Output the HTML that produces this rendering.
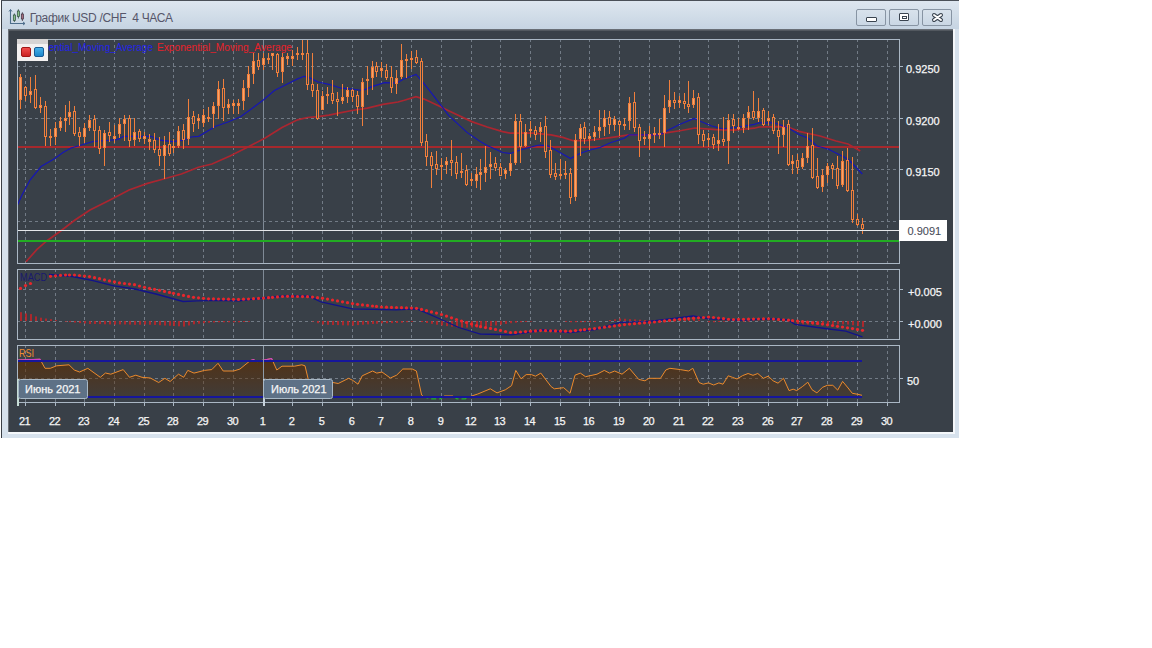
<!DOCTYPE html>
<html><head><meta charset="utf-8"><style>
html,body{margin:0;padding:0;width:1152px;height:648px;background:#fff;overflow:hidden;position:relative;font-family:"Liberation Sans",sans-serif}
#frame{position:absolute;left:1px;top:0;width:958px;height:438px;background:#d6e1ec;}
#frame:before{content:"";position:absolute;left:0;top:0;width:1px;height:438px;background:#3a3f46}
#frame:after{content:"";position:absolute;left:0;top:0;width:958px;height:1px;background:#4a5058}
#title{position:absolute;left:2px;top:1px;width:957px;height:28px;background:linear-gradient(#dde6ef,#c6d4e2)}
#ttext{position:absolute;left:29.7px;top:10.5px;font-size:12px;letter-spacing:-0.3px;color:#56566a;white-space:pre;line-height:14px}
#panel{position:absolute;left:8px;top:29px;width:945px;height:403px;background:linear-gradient(#394048,#394048) 1px 2px/944px 401px no-repeat,linear-gradient(#80868e,#52585f 1px,#52585f 2px,#394048 2px);box-shadow:inset 1px 0 0 #6a7078}
#strip{position:absolute;left:8px;top:432px;width:947px;height:2px;background:#f4f7fa}
#stripr{position:absolute;left:953px;top:29px;width:2px;height:405px;background:#f4f7fa}
.btn{position:absolute;top:9px;width:28px;height:15px;border:1px solid #8794a3;border-radius:2px;background:linear-gradient(#d8e2ec,#cad7e4)}
</style></head><body>
<div id="frame"></div>
<div id="title"></div>
<svg width="18" height="18" style="position:absolute;left:8px;top:8px" viewBox="0 0 18 18">
<path d="M2.5,1.8 V15.5 H17" stroke="#4e6e8c" stroke-width="1.1" fill="none"/>
<path d="M1,3.5 L2.5,1.5 L4,3.5 M15,14 L17,15.5 L15,17" stroke="#4e6e8c" stroke-width="1" fill="none"/>
<line x1="6.4" y1="5.5" x2="6.4" y2="14" stroke="#2e4a3e" stroke-width="0.8"/><rect x="5.3" y="7" width="2.2" height="5.5" fill="#88c088" stroke="#2e4a3e" stroke-width="0.7"/>
<line x1="10.4" y1="1.3" x2="10.4" y2="10.5" stroke="#2e4a3e" stroke-width="0.8"/><rect x="9.3" y="3" width="2.2" height="5.5" fill="#88c088" stroke="#2e4a3e" stroke-width="0.7"/>
<line x1="14.4" y1="4.3" x2="14.4" y2="13" stroke="#3e2e3e" stroke-width="0.8"/><rect x="13.3" y="6" width="2.2" height="5" fill="#a87080" stroke="#3e2e3e" stroke-width="0.7"/>
</svg>
<div id="ttext">График USD /CHF  4 ЧАСА</div>
<div class="btn" style="left:856px"><div style="position:absolute;left:9px;top:7px;width:9px;height:3px;border:1px solid #3a4450;border-radius:1px;background:#fff"></div></div>
<div class="btn" style="left:889px"><div style="position:absolute;left:9px;top:3px;width:8px;height:6px;border:1.5px solid #3a4450;border-radius:1px;background:#fff"><div style="position:absolute;left:2px;top:2px;width:3px;height:1px;border:1px solid #3a4450"></div></div></div>
<div class="btn" style="left:922px"><svg width="28" height="15" style="position:absolute;left:0;top:0"><path d="M11,5 L18,10 M18,5 L11,10" stroke="#3a4450" stroke-width="4" stroke-linecap="round"/><path d="M11,5 L18,10 M18,5 L11,10" stroke="#ffffff" stroke-width="2" stroke-linecap="round"/></svg></div>
<div id="panel"></div>
<div id="strip"></div>
<div id="stripr"></div>
<svg width="1152" height="648" viewBox="0 0 1152 648" style="position:absolute;left:0;top:0">
<defs>
<linearGradient id="rsig" x1="0" y1="361" x2="0" y2="397" gradientUnits="userSpaceOnUse">
<stop offset="0" stop-color="#5c2c00" stop-opacity="0.68"/>
<stop offset="1" stop-color="#5c2c00" stop-opacity="0.22"/>
</linearGradient>
<linearGradient id="gred" x1="0" y1="0" x2="0" y2="1"><stop offset="0" stop-color="#f45050"/><stop offset="1" stop-color="#c82020"/></linearGradient>
<linearGradient id="gblue" x1="0" y1="0" x2="0" y2="1"><stop offset="0" stop-color="#48b4ec"/><stop offset="1" stop-color="#1c84c8"/></linearGradient>
<clipPath id="cmain"><rect x="18" y="40" width="881" height="223"/></clipPath>
<clipPath id="cmacd"><rect x="18" y="271" width="881" height="68"/></clipPath>
<clipPath id="crsi"><rect x="18" y="347" width="881" height="55"/></clipPath>
<clipPath id="crsitop"><rect x="18" y="347" width="881" height="13"/></clipPath>
<clipPath id="crsibot"><rect x="18" y="397" width="881" height="5"/></clipPath>
<clipPath id="crsimid"><rect x="18" y="347" width="881" height="50"/></clipPath>
<clipPath id="crsifill"><rect x="18" y="361" width="881" height="36"/></clipPath>
</defs>
<!-- main panel -->
<g shape-rendering="crispEdges">
<line x1="25.5" y1="39" x2="25.5" y2="263" stroke="#727b86" stroke-width="1" stroke-dasharray="3,3"/>
<line x1="55.5" y1="39" x2="55.5" y2="263" stroke="#727b86" stroke-width="1" stroke-dasharray="3,3"/>
<line x1="84.5" y1="39" x2="84.5" y2="263" stroke="#727b86" stroke-width="1" stroke-dasharray="3,3"/>
<line x1="114.5" y1="39" x2="114.5" y2="263" stroke="#727b86" stroke-width="1" stroke-dasharray="3,3"/>
<line x1="144.5" y1="39" x2="144.5" y2="263" stroke="#727b86" stroke-width="1" stroke-dasharray="3,3"/>
<line x1="173.5" y1="39" x2="173.5" y2="263" stroke="#727b86" stroke-width="1" stroke-dasharray="3,3"/>
<line x1="203.5" y1="39" x2="203.5" y2="263" stroke="#727b86" stroke-width="1" stroke-dasharray="3,3"/>
<line x1="233.5" y1="39" x2="233.5" y2="263" stroke="#727b86" stroke-width="1" stroke-dasharray="3,3"/>
<rect x="263" y="39" width="1" height="224" fill="#7f8a96"/>
<line x1="292.5" y1="39" x2="292.5" y2="263" stroke="#727b86" stroke-width="1" stroke-dasharray="3,3"/>
<line x1="322.5" y1="39" x2="322.5" y2="263" stroke="#727b86" stroke-width="1" stroke-dasharray="3,3"/>
<line x1="352.5" y1="39" x2="352.5" y2="263" stroke="#727b86" stroke-width="1" stroke-dasharray="3,3"/>
<line x1="381.5" y1="39" x2="381.5" y2="263" stroke="#727b86" stroke-width="1" stroke-dasharray="3,3"/>
<line x1="411.5" y1="39" x2="411.5" y2="263" stroke="#727b86" stroke-width="1" stroke-dasharray="3,3"/>
<line x1="441.5" y1="39" x2="441.5" y2="263" stroke="#727b86" stroke-width="1" stroke-dasharray="3,3"/>
<line x1="471.5" y1="39" x2="471.5" y2="263" stroke="#727b86" stroke-width="1" stroke-dasharray="3,3"/>
<line x1="500.5" y1="39" x2="500.5" y2="263" stroke="#727b86" stroke-width="1" stroke-dasharray="3,3"/>
<line x1="530.5" y1="39" x2="530.5" y2="263" stroke="#727b86" stroke-width="1" stroke-dasharray="3,3"/>
<line x1="560.5" y1="39" x2="560.5" y2="263" stroke="#727b86" stroke-width="1" stroke-dasharray="3,3"/>
<line x1="589.5" y1="39" x2="589.5" y2="263" stroke="#727b86" stroke-width="1" stroke-dasharray="3,3"/>
<line x1="619.5" y1="39" x2="619.5" y2="263" stroke="#727b86" stroke-width="1" stroke-dasharray="3,3"/>
<line x1="649.5" y1="39" x2="649.5" y2="263" stroke="#727b86" stroke-width="1" stroke-dasharray="3,3"/>
<line x1="679.5" y1="39" x2="679.5" y2="263" stroke="#727b86" stroke-width="1" stroke-dasharray="3,3"/>
<line x1="708.5" y1="39" x2="708.5" y2="263" stroke="#727b86" stroke-width="1" stroke-dasharray="3,3"/>
<line x1="738.5" y1="39" x2="738.5" y2="263" stroke="#727b86" stroke-width="1" stroke-dasharray="3,3"/>
<line x1="768.5" y1="39" x2="768.5" y2="263" stroke="#727b86" stroke-width="1" stroke-dasharray="3,3"/>
<line x1="797.5" y1="39" x2="797.5" y2="263" stroke="#727b86" stroke-width="1" stroke-dasharray="3,3"/>
<line x1="827.5" y1="39" x2="827.5" y2="263" stroke="#727b86" stroke-width="1" stroke-dasharray="3,3"/>
<line x1="857.5" y1="39" x2="857.5" y2="263" stroke="#727b86" stroke-width="1" stroke-dasharray="3,3"/>
<line x1="887.5" y1="39" x2="887.5" y2="263" stroke="#727b86" stroke-width="1" stroke-dasharray="3,3"/>
<line x1="17" y1="66.5" x2="899" y2="66.5" stroke="#727b86" stroke-width="1" stroke-dasharray="3,3"/><line x1="17" y1="118.5" x2="899" y2="118.5" stroke="#727b86" stroke-width="1" stroke-dasharray="3,3"/><line x1="17" y1="169.5" x2="899" y2="169.5" stroke="#727b86" stroke-width="1" stroke-dasharray="3,3"/><line x1="17" y1="221.5" x2="899" y2="221.5" stroke="#727b86" stroke-width="1" stroke-dasharray="3,3"/>
</g>
<g clip-path="url(#cmain)" fill="none">
<rect x="17" y="146" width="882" height="2" fill="#a6282c" shape-rendering="crispEdges"/>
<path d="M26.0,261.7 L37.0,249.4 L47.0,240.7 L60.0,231.5 L75.0,220.0 L90.0,210.0 L110.0,200.0 L129.0,190.0 L147.5,183.4 L164.5,178.7 L181.4,174.0 L198.4,167.2 L212.0,164.0 L230.0,156.0 L248.0,147.0 L265.2,138.0 L282.0,127.5 L297.6,119.8 L307.3,117.5 L318.0,116.7 L328.9,115.2 L339.7,112.8 L352.0,110.5 L367.4,108.2 L382.9,104.4 L398.0,102.0 L404.3,100.3 L416.0,96.6 L424.1,99.1 L439.0,105.9 L448.6,110.8 L471.7,121.6 L487.2,127.0 L502.6,131.6 L510.2,133.1 L534.0,133.1 L551.0,134.8 L562.8,137.4 L573.0,140.7 L585.0,140.7 L600.0,139.0 L612.0,137.4 L629.0,134.8 L656.7,134.8 L666.0,132.8 L681.4,130.5 L695.0,128.0 L715.8,129.7 L734.3,130.2 L754.4,128.2 L759.0,127.0 L780.6,126.6 L788.0,127.0 L800.0,131.7 L820.0,136.0 L836.0,141.0 L848.0,144.0 L860.3,151.0" stroke="#aa2630" stroke-width="1.7"/>
<path d="M17.0,206.0 L22.0,195.0 L30.0,180.0 L41.0,166.5 L54.0,159.0 L63.0,152.6 L71.0,148.0 L78.0,146.0 L93.0,141.5 L106.0,140.5 L117.0,139.6 L123.9,136.3 L150.9,136.3 L160.2,140.2 L172.5,141.7 L183.3,140.2 L191.0,137.0 L198.7,136.3 L215.7,126.3 L228.0,122.0 L240.5,116.7 L251.3,109.0 L263.6,99.7 L274.4,90.5 L286.8,84.3 L297.6,78.9 L304.2,76.3 L308.8,77.4 L318.0,82.0 L328.9,84.3 L341.2,88.2 L352.0,89.0 L362.8,90.5 L372.0,86.6 L384.4,82.7 L397.0,83.0 L404.3,78.7 L416.0,74.4 L421.6,80.6 L429.0,89.9 L441.4,105.9 L448.6,115.4 L467.0,132.4 L479.4,140.9 L487.2,145.5 L502.6,152.5 L510.2,153.5 L520.4,150.0 L528.9,147.5 L539.0,145.0 L547.5,145.8 L554.3,149.2 L570.5,158.6 L579.8,153.5 L590.0,150.0 L600.0,147.5 L610.4,142.8 L624.3,138.2 L629.0,134.8 L641.3,134.8 L659.8,134.8 L666.0,131.2 L680.0,124.3 L694.2,118.4 L700.3,121.2 L711.0,125.8 L723.5,129.0 L739.0,127.0 L754.4,124.3 L759.0,122.8 L774.4,122.8 L780.6,125.0 L790.0,129.0 L800.0,135.0 L808.0,138.0 L817.0,146.0 L828.0,149.0 L844.0,157.0 L850.0,161.0 L862.3,174.0" stroke="#1616b4" stroke-width="1.2"/>
<g shape-rendering="crispEdges">
<rect x="20" y="74" width="1" height="35" fill="#f07f3c"/>
<rect x="19" y="77" width="3" height="23" fill="#f07f3c"/>
<rect x="20" y="78" width="1" height="21" fill="#f6a56c"/>
<rect x="25" y="86" width="1" height="15" fill="#f07f3c"/>
<rect x="24" y="87" width="3" height="9" fill="#f07f3c"/>
<rect x="25" y="88" width="1" height="7" fill="#394048"/>
<rect x="30" y="77" width="1" height="26" fill="#f07f3c"/>
<rect x="29" y="91" width="3" height="4" fill="#f07f3c"/>
<rect x="30" y="92" width="1" height="2" fill="#f6a56c"/>
<rect x="35" y="75" width="1" height="34" fill="#f07f3c"/>
<rect x="34" y="89" width="3" height="19" fill="#f07f3c"/>
<rect x="35" y="90" width="1" height="17" fill="#394048"/>
<rect x="40" y="97" width="1" height="16" fill="#f07f3c"/>
<rect x="39" y="105" width="3" height="3" fill="#f07f3c"/>
<rect x="40" y="106" width="1" height="1" fill="#f6a56c"/>
<rect x="45" y="101" width="1" height="45" fill="#f07f3c"/>
<rect x="44" y="106" width="3" height="31" fill="#f07f3c"/>
<rect x="45" y="107" width="1" height="29" fill="#394048"/>
<rect x="50" y="129" width="1" height="17" fill="#f07f3c"/>
<rect x="49" y="136" width="3" height="2" fill="#f07f3c"/>
<rect x="55" y="122" width="1" height="23" fill="#f07f3c"/>
<rect x="54" y="128" width="3" height="9" fill="#f07f3c"/>
<rect x="55" y="129" width="1" height="7" fill="#f6a56c"/>
<rect x="60" y="117" width="1" height="14" fill="#f07f3c"/>
<rect x="59" y="121" width="3" height="7" fill="#f07f3c"/>
<rect x="60" y="122" width="1" height="5" fill="#f6a56c"/>
<rect x="65" y="105" width="1" height="27" fill="#f07f3c"/>
<rect x="64" y="118" width="3" height="3" fill="#f07f3c"/>
<rect x="65" y="119" width="1" height="1" fill="#f6a56c"/>
<rect x="69" y="101" width="1" height="24" fill="#f07f3c"/>
<rect x="68" y="112" width="3" height="5" fill="#f07f3c"/>
<rect x="69" y="113" width="1" height="3" fill="#f6a56c"/>
<rect x="74" y="106" width="1" height="30" fill="#f07f3c"/>
<rect x="73" y="111" width="3" height="23" fill="#f07f3c"/>
<rect x="74" y="112" width="1" height="21" fill="#394048"/>
<rect x="79" y="127" width="1" height="19" fill="#f07f3c"/>
<rect x="78" y="132" width="3" height="5" fill="#f07f3c"/>
<rect x="79" y="133" width="1" height="3" fill="#394048"/>
<rect x="84" y="123" width="1" height="20" fill="#f07f3c"/>
<rect x="83" y="128" width="3" height="9" fill="#f07f3c"/>
<rect x="84" y="129" width="1" height="7" fill="#f6a56c"/>
<rect x="89" y="115" width="1" height="16" fill="#f07f3c"/>
<rect x="88" y="120" width="3" height="8" fill="#f07f3c"/>
<rect x="89" y="121" width="1" height="6" fill="#f6a56c"/>
<rect x="94" y="115" width="1" height="32" fill="#f07f3c"/>
<rect x="93" y="119" width="3" height="12" fill="#f07f3c"/>
<rect x="94" y="120" width="1" height="10" fill="#394048"/>
<rect x="99" y="126" width="1" height="28" fill="#f07f3c"/>
<rect x="98" y="130" width="3" height="19" fill="#f07f3c"/>
<rect x="99" y="131" width="1" height="17" fill="#394048"/>
<rect x="104" y="130" width="1" height="36" fill="#f07f3c"/>
<rect x="103" y="133" width="3" height="15" fill="#f07f3c"/>
<rect x="104" y="134" width="1" height="13" fill="#f6a56c"/>
<rect x="109" y="122" width="1" height="20" fill="#f07f3c"/>
<rect x="108" y="132" width="3" height="4" fill="#f07f3c"/>
<rect x="109" y="133" width="1" height="2" fill="#394048"/>
<rect x="114" y="125" width="1" height="18" fill="#f07f3c"/>
<rect x="113" y="136" width="3" height="3" fill="#f07f3c"/>
<rect x="114" y="137" width="1" height="1" fill="#f6a56c"/>
<rect x="119" y="118" width="1" height="20" fill="#f07f3c"/>
<rect x="118" y="124" width="3" height="10" fill="#f07f3c"/>
<rect x="119" y="125" width="1" height="8" fill="#f6a56c"/>
<rect x="124" y="115" width="1" height="26" fill="#f07f3c"/>
<rect x="123" y="119" width="3" height="5" fill="#f07f3c"/>
<rect x="124" y="120" width="1" height="3" fill="#f6a56c"/>
<rect x="129" y="115" width="1" height="32" fill="#f07f3c"/>
<rect x="128" y="118" width="3" height="23" fill="#f07f3c"/>
<rect x="129" y="119" width="1" height="21" fill="#394048"/>
<rect x="134" y="118" width="1" height="28" fill="#f07f3c"/>
<rect x="133" y="132" width="3" height="8" fill="#f07f3c"/>
<rect x="134" y="133" width="1" height="6" fill="#f6a56c"/>
<rect x="139" y="129" width="1" height="13" fill="#f07f3c"/>
<rect x="138" y="131" width="3" height="8" fill="#f07f3c"/>
<rect x="139" y="132" width="1" height="6" fill="#394048"/>
<rect x="144" y="132" width="1" height="12" fill="#f07f3c"/>
<rect x="143" y="136" width="3" height="3" fill="#f07f3c"/>
<rect x="144" y="137" width="1" height="1" fill="#f6a56c"/>
<rect x="149" y="134" width="1" height="16" fill="#f07f3c"/>
<rect x="148" y="139" width="3" height="3" fill="#f07f3c"/>
<rect x="149" y="140" width="1" height="1" fill="#f6a56c"/>
<rect x="154" y="133" width="1" height="20" fill="#f07f3c"/>
<rect x="153" y="140" width="3" height="10" fill="#f07f3c"/>
<rect x="154" y="141" width="1" height="8" fill="#394048"/>
<rect x="159" y="137" width="1" height="29" fill="#f07f3c"/>
<rect x="158" y="149" width="3" height="7" fill="#f07f3c"/>
<rect x="159" y="150" width="1" height="5" fill="#394048"/>
<rect x="164" y="136" width="1" height="43" fill="#f07f3c"/>
<rect x="163" y="145" width="3" height="11" fill="#f07f3c"/>
<rect x="164" y="146" width="1" height="9" fill="#f6a56c"/>
<rect x="169" y="132" width="1" height="24" fill="#f07f3c"/>
<rect x="168" y="144" width="3" height="10" fill="#f07f3c"/>
<rect x="169" y="145" width="1" height="8" fill="#394048"/>
<rect x="173" y="139" width="1" height="14" fill="#f07f3c"/>
<rect x="172" y="146" width="3" height="2" fill="#f07f3c"/>
<rect x="178" y="126" width="1" height="22" fill="#f07f3c"/>
<rect x="177" y="131" width="3" height="15" fill="#f07f3c"/>
<rect x="178" y="132" width="1" height="13" fill="#f6a56c"/>
<rect x="183" y="124" width="1" height="25" fill="#f07f3c"/>
<rect x="182" y="130" width="3" height="10" fill="#f07f3c"/>
<rect x="183" y="131" width="1" height="8" fill="#394048"/>
<rect x="188" y="99" width="1" height="46" fill="#f07f3c"/>
<rect x="187" y="117" width="3" height="22" fill="#f07f3c"/>
<rect x="188" y="118" width="1" height="20" fill="#f6a56c"/>
<rect x="193" y="111" width="1" height="21" fill="#f07f3c"/>
<rect x="192" y="116" width="3" height="8" fill="#f07f3c"/>
<rect x="193" y="117" width="1" height="6" fill="#394048"/>
<rect x="198" y="114" width="1" height="15" fill="#f07f3c"/>
<rect x="197" y="118" width="3" height="3" fill="#f07f3c"/>
<rect x="198" y="119" width="1" height="1" fill="#f6a56c"/>
<rect x="203" y="109" width="1" height="18" fill="#f07f3c"/>
<rect x="202" y="115" width="3" height="8" fill="#f07f3c"/>
<rect x="203" y="116" width="1" height="6" fill="#f6a56c"/>
<rect x="208" y="107" width="1" height="15" fill="#f07f3c"/>
<rect x="207" y="117" width="3" height="2" fill="#f07f3c"/>
<rect x="213" y="102" width="1" height="26" fill="#f07f3c"/>
<rect x="212" y="106" width="3" height="8" fill="#f07f3c"/>
<rect x="213" y="107" width="1" height="6" fill="#f6a56c"/>
<rect x="218" y="81" width="1" height="38" fill="#f07f3c"/>
<rect x="217" y="89" width="3" height="17" fill="#f07f3c"/>
<rect x="218" y="90" width="1" height="15" fill="#f6a56c"/>
<rect x="223" y="79" width="1" height="42" fill="#f07f3c"/>
<rect x="222" y="88" width="3" height="20" fill="#f07f3c"/>
<rect x="223" y="89" width="1" height="18" fill="#394048"/>
<rect x="228" y="99" width="1" height="15" fill="#f07f3c"/>
<rect x="227" y="104" width="3" height="4" fill="#f07f3c"/>
<rect x="228" y="105" width="1" height="2" fill="#f6a56c"/>
<rect x="233" y="100" width="1" height="14" fill="#f07f3c"/>
<rect x="232" y="103" width="3" height="3" fill="#f07f3c"/>
<rect x="233" y="104" width="1" height="1" fill="#f6a56c"/>
<rect x="238" y="99" width="1" height="15" fill="#f07f3c"/>
<rect x="237" y="103" width="3" height="3" fill="#f07f3c"/>
<rect x="238" y="104" width="1" height="1" fill="#f6a56c"/>
<rect x="243" y="80" width="1" height="30" fill="#f07f3c"/>
<rect x="242" y="88" width="3" height="13" fill="#f07f3c"/>
<rect x="243" y="89" width="1" height="11" fill="#f6a56c"/>
<rect x="248" y="66" width="1" height="31" fill="#f07f3c"/>
<rect x="247" y="74" width="3" height="14" fill="#f07f3c"/>
<rect x="248" y="75" width="1" height="12" fill="#f6a56c"/>
<rect x="253" y="53" width="1" height="31" fill="#f07f3c"/>
<rect x="252" y="61" width="3" height="13" fill="#f07f3c"/>
<rect x="253" y="62" width="1" height="11" fill="#f6a56c"/>
<rect x="258" y="53" width="1" height="17" fill="#f07f3c"/>
<rect x="257" y="60" width="3" height="7" fill="#f07f3c"/>
<rect x="258" y="61" width="1" height="5" fill="#394048"/>
<rect x="263" y="53" width="1" height="17" fill="#f07f3c"/>
<rect x="262" y="58" width="3" height="7" fill="#f07f3c"/>
<rect x="263" y="59" width="1" height="5" fill="#f6a56c"/>
<rect x="268" y="53" width="1" height="11" fill="#f07f3c"/>
<rect x="267" y="58" width="3" height="2" fill="#f07f3c"/>
<rect x="272" y="53" width="1" height="17" fill="#f07f3c"/>
<rect x="271" y="53" width="3" height="3" fill="#f07f3c"/>
<rect x="272" y="54" width="1" height="1" fill="#f6a56c"/>
<rect x="277" y="53" width="1" height="24" fill="#f07f3c"/>
<rect x="276" y="54" width="3" height="19" fill="#f07f3c"/>
<rect x="277" y="55" width="1" height="17" fill="#394048"/>
<rect x="282" y="53" width="1" height="30" fill="#f07f3c"/>
<rect x="281" y="57" width="3" height="15" fill="#f07f3c"/>
<rect x="282" y="58" width="1" height="13" fill="#f6a56c"/>
<rect x="287" y="53" width="1" height="12" fill="#f07f3c"/>
<rect x="286" y="56" width="3" height="3" fill="#f07f3c"/>
<rect x="287" y="57" width="1" height="1" fill="#f6a56c"/>
<rect x="292" y="50" width="1" height="16" fill="#f07f3c"/>
<rect x="291" y="56" width="3" height="3" fill="#f07f3c"/>
<rect x="292" y="57" width="1" height="1" fill="#f6a56c"/>
<rect x="297" y="47" width="1" height="13" fill="#f07f3c"/>
<rect x="296" y="53" width="3" height="2" fill="#f07f3c"/>
<rect x="302" y="40" width="1" height="20" fill="#f07f3c"/>
<rect x="301" y="53" width="3" height="2" fill="#f07f3c"/>
<rect x="307" y="39" width="1" height="51" fill="#f07f3c"/>
<rect x="306" y="53" width="3" height="32" fill="#f07f3c"/>
<rect x="307" y="54" width="1" height="30" fill="#394048"/>
<rect x="312" y="53" width="1" height="44" fill="#f07f3c"/>
<rect x="311" y="84" width="3" height="7" fill="#f07f3c"/>
<rect x="312" y="85" width="1" height="5" fill="#394048"/>
<rect x="317" y="84" width="1" height="36" fill="#f07f3c"/>
<rect x="316" y="90" width="3" height="29" fill="#f07f3c"/>
<rect x="317" y="91" width="1" height="27" fill="#394048"/>
<rect x="322" y="91" width="1" height="19" fill="#f07f3c"/>
<rect x="321" y="96" width="3" height="14" fill="#f07f3c"/>
<rect x="322" y="97" width="1" height="12" fill="#f6a56c"/>
<rect x="327" y="87" width="1" height="17" fill="#f07f3c"/>
<rect x="326" y="94" width="3" height="2" fill="#f07f3c"/>
<rect x="332" y="80" width="1" height="24" fill="#f07f3c"/>
<rect x="331" y="93" width="3" height="8" fill="#f07f3c"/>
<rect x="332" y="94" width="1" height="6" fill="#394048"/>
<rect x="337" y="92" width="1" height="24" fill="#f07f3c"/>
<rect x="336" y="99" width="3" height="3" fill="#f07f3c"/>
<rect x="337" y="100" width="1" height="1" fill="#394048"/>
<rect x="342" y="84" width="1" height="20" fill="#f07f3c"/>
<rect x="341" y="97" width="3" height="4" fill="#f07f3c"/>
<rect x="342" y="98" width="1" height="2" fill="#f6a56c"/>
<rect x="347" y="87" width="1" height="16" fill="#f07f3c"/>
<rect x="346" y="90" width="3" height="7" fill="#f07f3c"/>
<rect x="347" y="91" width="1" height="5" fill="#f6a56c"/>
<rect x="352" y="89" width="1" height="13" fill="#f07f3c"/>
<rect x="351" y="90" width="3" height="7" fill="#f07f3c"/>
<rect x="352" y="91" width="1" height="5" fill="#394048"/>
<rect x="357" y="91" width="1" height="23" fill="#f07f3c"/>
<rect x="356" y="95" width="3" height="12" fill="#f07f3c"/>
<rect x="357" y="96" width="1" height="10" fill="#394048"/>
<rect x="362" y="78" width="1" height="48" fill="#f07f3c"/>
<rect x="361" y="82" width="3" height="25" fill="#f07f3c"/>
<rect x="362" y="83" width="1" height="23" fill="#f6a56c"/>
<rect x="367" y="66" width="1" height="29" fill="#f07f3c"/>
<rect x="366" y="79" width="3" height="2" fill="#f07f3c"/>
<rect x="372" y="61" width="1" height="29" fill="#f07f3c"/>
<rect x="371" y="67" width="3" height="11" fill="#f07f3c"/>
<rect x="372" y="68" width="1" height="9" fill="#f6a56c"/>
<rect x="376" y="62" width="1" height="15" fill="#f07f3c"/>
<rect x="375" y="66" width="3" height="6" fill="#f07f3c"/>
<rect x="376" y="67" width="1" height="4" fill="#394048"/>
<rect x="381" y="62" width="1" height="15" fill="#f07f3c"/>
<rect x="380" y="68" width="3" height="3" fill="#f07f3c"/>
<rect x="381" y="69" width="1" height="1" fill="#f6a56c"/>
<rect x="386" y="64" width="1" height="16" fill="#f07f3c"/>
<rect x="385" y="70" width="3" height="8" fill="#f07f3c"/>
<rect x="386" y="71" width="1" height="6" fill="#394048"/>
<rect x="391" y="66" width="1" height="27" fill="#f07f3c"/>
<rect x="390" y="77" width="3" height="11" fill="#f07f3c"/>
<rect x="391" y="78" width="1" height="9" fill="#394048"/>
<rect x="396" y="70" width="1" height="24" fill="#f07f3c"/>
<rect x="395" y="78" width="3" height="6" fill="#f07f3c"/>
<rect x="396" y="79" width="1" height="4" fill="#f6a56c"/>
<rect x="401" y="44" width="1" height="35" fill="#f07f3c"/>
<rect x="400" y="60" width="3" height="17" fill="#f07f3c"/>
<rect x="401" y="61" width="1" height="15" fill="#f6a56c"/>
<rect x="406" y="54" width="1" height="24" fill="#f07f3c"/>
<rect x="405" y="59" width="3" height="2" fill="#f07f3c"/>
<rect x="411" y="51" width="1" height="18" fill="#f07f3c"/>
<rect x="410" y="58" width="3" height="2" fill="#f07f3c"/>
<rect x="416" y="50" width="1" height="14" fill="#f07f3c"/>
<rect x="415" y="57" width="3" height="6" fill="#f07f3c"/>
<rect x="416" y="58" width="1" height="4" fill="#394048"/>
<rect x="421" y="58" width="1" height="88" fill="#f07f3c"/>
<rect x="420" y="61" width="3" height="82" fill="#f07f3c"/>
<rect x="421" y="62" width="1" height="80" fill="#394048"/>
<rect x="426" y="134" width="1" height="32" fill="#f07f3c"/>
<rect x="425" y="141" width="3" height="16" fill="#f07f3c"/>
<rect x="426" y="142" width="1" height="14" fill="#394048"/>
<rect x="431" y="152" width="1" height="36" fill="#f07f3c"/>
<rect x="430" y="156" width="3" height="10" fill="#f07f3c"/>
<rect x="431" y="157" width="1" height="8" fill="#394048"/>
<rect x="436" y="151" width="1" height="24" fill="#f07f3c"/>
<rect x="435" y="164" width="3" height="5" fill="#f07f3c"/>
<rect x="436" y="165" width="1" height="3" fill="#394048"/>
<rect x="441" y="158" width="1" height="22" fill="#f07f3c"/>
<rect x="440" y="165" width="3" height="2" fill="#f07f3c"/>
<rect x="446" y="157" width="1" height="17" fill="#f07f3c"/>
<rect x="445" y="161" width="3" height="4" fill="#f07f3c"/>
<rect x="446" y="162" width="1" height="2" fill="#f6a56c"/>
<rect x="451" y="140" width="1" height="36" fill="#f07f3c"/>
<rect x="450" y="160" width="3" height="3" fill="#f07f3c"/>
<rect x="451" y="161" width="1" height="1" fill="#394048"/>
<rect x="456" y="156" width="1" height="23" fill="#f07f3c"/>
<rect x="455" y="162" width="3" height="12" fill="#f07f3c"/>
<rect x="456" y="163" width="1" height="10" fill="#394048"/>
<rect x="461" y="153" width="1" height="25" fill="#f07f3c"/>
<rect x="460" y="171" width="3" height="2" fill="#f07f3c"/>
<rect x="466" y="165" width="1" height="21" fill="#f07f3c"/>
<rect x="465" y="170" width="3" height="15" fill="#f07f3c"/>
<rect x="466" y="171" width="1" height="13" fill="#394048"/>
<rect x="471" y="173" width="1" height="13" fill="#f07f3c"/>
<rect x="470" y="179" width="3" height="2" fill="#f07f3c"/>
<rect x="476" y="167" width="1" height="21" fill="#f07f3c"/>
<rect x="475" y="174" width="3" height="7" fill="#f07f3c"/>
<rect x="476" y="175" width="1" height="5" fill="#f6a56c"/>
<rect x="480" y="159" width="1" height="31" fill="#f07f3c"/>
<rect x="479" y="172" width="3" height="3" fill="#f07f3c"/>
<rect x="480" y="173" width="1" height="1" fill="#f6a56c"/>
<rect x="485" y="146" width="1" height="36" fill="#f07f3c"/>
<rect x="484" y="167" width="3" height="6" fill="#f07f3c"/>
<rect x="485" y="168" width="1" height="4" fill="#f6a56c"/>
<rect x="490" y="152" width="1" height="27" fill="#f07f3c"/>
<rect x="489" y="164" width="3" height="3" fill="#f07f3c"/>
<rect x="490" y="165" width="1" height="1" fill="#f6a56c"/>
<rect x="495" y="157" width="1" height="14" fill="#f07f3c"/>
<rect x="494" y="163" width="3" height="5" fill="#f07f3c"/>
<rect x="495" y="164" width="1" height="3" fill="#394048"/>
<rect x="500" y="163" width="1" height="13" fill="#f07f3c"/>
<rect x="499" y="167" width="3" height="9" fill="#f07f3c"/>
<rect x="500" y="168" width="1" height="7" fill="#394048"/>
<rect x="505" y="168" width="1" height="11" fill="#f07f3c"/>
<rect x="504" y="170" width="3" height="4" fill="#f07f3c"/>
<rect x="505" y="171" width="1" height="2" fill="#f6a56c"/>
<rect x="510" y="154" width="1" height="22" fill="#f07f3c"/>
<rect x="509" y="163" width="3" height="8" fill="#f07f3c"/>
<rect x="510" y="164" width="1" height="6" fill="#f6a56c"/>
<rect x="515" y="114" width="1" height="51" fill="#f07f3c"/>
<rect x="514" y="121" width="3" height="42" fill="#f07f3c"/>
<rect x="515" y="122" width="1" height="40" fill="#f6a56c"/>
<rect x="520" y="114" width="1" height="49" fill="#f07f3c"/>
<rect x="519" y="121" width="3" height="26" fill="#f07f3c"/>
<rect x="520" y="122" width="1" height="24" fill="#394048"/>
<rect x="525" y="124" width="1" height="23" fill="#f07f3c"/>
<rect x="524" y="132" width="3" height="14" fill="#f07f3c"/>
<rect x="525" y="133" width="1" height="12" fill="#f6a56c"/>
<rect x="530" y="121" width="1" height="16" fill="#f07f3c"/>
<rect x="529" y="129" width="3" height="2" fill="#f07f3c"/>
<rect x="535" y="126" width="1" height="14" fill="#f07f3c"/>
<rect x="534" y="130" width="3" height="5" fill="#f07f3c"/>
<rect x="535" y="131" width="1" height="3" fill="#394048"/>
<rect x="540" y="122" width="1" height="20" fill="#f07f3c"/>
<rect x="539" y="127" width="3" height="5" fill="#f07f3c"/>
<rect x="540" y="128" width="1" height="3" fill="#f6a56c"/>
<rect x="545" y="116" width="1" height="42" fill="#f07f3c"/>
<rect x="544" y="126" width="3" height="26" fill="#f07f3c"/>
<rect x="545" y="127" width="1" height="24" fill="#394048"/>
<rect x="550" y="140" width="1" height="38" fill="#f07f3c"/>
<rect x="549" y="150" width="3" height="25" fill="#f07f3c"/>
<rect x="550" y="151" width="1" height="23" fill="#394048"/>
<rect x="555" y="163" width="1" height="17" fill="#f07f3c"/>
<rect x="554" y="173" width="3" height="4" fill="#f07f3c"/>
<rect x="555" y="174" width="1" height="2" fill="#394048"/>
<rect x="560" y="159" width="1" height="20" fill="#f07f3c"/>
<rect x="559" y="174" width="3" height="2" fill="#f07f3c"/>
<rect x="565" y="161" width="1" height="18" fill="#f07f3c"/>
<rect x="564" y="173" width="3" height="2" fill="#f07f3c"/>
<rect x="570" y="168" width="1" height="36" fill="#f07f3c"/>
<rect x="569" y="173" width="3" height="25" fill="#f07f3c"/>
<rect x="570" y="174" width="1" height="23" fill="#394048"/>
<rect x="575" y="134" width="1" height="67" fill="#f07f3c"/>
<rect x="574" y="140" width="3" height="57" fill="#f07f3c"/>
<rect x="575" y="141" width="1" height="55" fill="#f6a56c"/>
<rect x="580" y="124" width="1" height="32" fill="#f07f3c"/>
<rect x="579" y="128" width="3" height="11" fill="#f07f3c"/>
<rect x="580" y="129" width="1" height="9" fill="#f6a56c"/>
<rect x="584" y="122" width="1" height="22" fill="#f07f3c"/>
<rect x="583" y="127" width="3" height="12" fill="#f07f3c"/>
<rect x="584" y="128" width="1" height="10" fill="#394048"/>
<rect x="589" y="133" width="1" height="17" fill="#f07f3c"/>
<rect x="588" y="136" width="3" height="3" fill="#f07f3c"/>
<rect x="589" y="137" width="1" height="1" fill="#f6a56c"/>
<rect x="594" y="126" width="1" height="15" fill="#f07f3c"/>
<rect x="593" y="132" width="3" height="5" fill="#f07f3c"/>
<rect x="594" y="133" width="1" height="3" fill="#f6a56c"/>
<rect x="599" y="110" width="1" height="28" fill="#f07f3c"/>
<rect x="598" y="127" width="3" height="4" fill="#f07f3c"/>
<rect x="599" y="128" width="1" height="2" fill="#f6a56c"/>
<rect x="604" y="110" width="1" height="26" fill="#f07f3c"/>
<rect x="603" y="118" width="3" height="9" fill="#f07f3c"/>
<rect x="604" y="119" width="1" height="7" fill="#f6a56c"/>
<rect x="609" y="111" width="1" height="23" fill="#f07f3c"/>
<rect x="608" y="117" width="3" height="8" fill="#f07f3c"/>
<rect x="609" y="118" width="1" height="6" fill="#394048"/>
<rect x="614" y="116" width="1" height="15" fill="#f07f3c"/>
<rect x="613" y="119" width="3" height="6" fill="#f07f3c"/>
<rect x="614" y="120" width="1" height="4" fill="#f6a56c"/>
<rect x="619" y="120" width="1" height="16" fill="#f07f3c"/>
<rect x="618" y="121" width="3" height="4" fill="#f07f3c"/>
<rect x="619" y="122" width="1" height="2" fill="#394048"/>
<rect x="624" y="118" width="1" height="12" fill="#f07f3c"/>
<rect x="623" y="124" width="3" height="2" fill="#f07f3c"/>
<rect x="629" y="97" width="1" height="33" fill="#f07f3c"/>
<rect x="628" y="103" width="3" height="18" fill="#f07f3c"/>
<rect x="629" y="104" width="1" height="16" fill="#f6a56c"/>
<rect x="634" y="92" width="1" height="40" fill="#f07f3c"/>
<rect x="633" y="102" width="3" height="26" fill="#f07f3c"/>
<rect x="634" y="103" width="1" height="24" fill="#394048"/>
<rect x="639" y="124" width="1" height="33" fill="#f07f3c"/>
<rect x="638" y="127" width="3" height="14" fill="#f07f3c"/>
<rect x="639" y="128" width="1" height="12" fill="#394048"/>
<rect x="644" y="131" width="1" height="14" fill="#f07f3c"/>
<rect x="643" y="137" width="3" height="2" fill="#f07f3c"/>
<rect x="649" y="126" width="1" height="24" fill="#f07f3c"/>
<rect x="648" y="134" width="3" height="5" fill="#f07f3c"/>
<rect x="649" y="135" width="1" height="3" fill="#f6a56c"/>
<rect x="654" y="127" width="1" height="16" fill="#f07f3c"/>
<rect x="653" y="133" width="3" height="2" fill="#f07f3c"/>
<rect x="659" y="119" width="1" height="20" fill="#f07f3c"/>
<rect x="658" y="133" width="3" height="2" fill="#f07f3c"/>
<rect x="664" y="95" width="1" height="52" fill="#f07f3c"/>
<rect x="663" y="108" width="3" height="25" fill="#f07f3c"/>
<rect x="664" y="109" width="1" height="23" fill="#f6a56c"/>
<rect x="669" y="80" width="1" height="33" fill="#f07f3c"/>
<rect x="668" y="100" width="3" height="7" fill="#f07f3c"/>
<rect x="669" y="101" width="1" height="5" fill="#f6a56c"/>
<rect x="674" y="92" width="1" height="17" fill="#f07f3c"/>
<rect x="673" y="100" width="3" height="3" fill="#f07f3c"/>
<rect x="674" y="101" width="1" height="1" fill="#394048"/>
<rect x="679" y="96" width="1" height="12" fill="#f07f3c"/>
<rect x="678" y="100" width="3" height="3" fill="#f07f3c"/>
<rect x="679" y="101" width="1" height="1" fill="#f6a56c"/>
<rect x="684" y="93" width="1" height="16" fill="#f07f3c"/>
<rect x="683" y="101" width="3" height="3" fill="#f07f3c"/>
<rect x="684" y="102" width="1" height="1" fill="#394048"/>
<rect x="688" y="81" width="1" height="32" fill="#f07f3c"/>
<rect x="687" y="104" width="3" height="3" fill="#f07f3c"/>
<rect x="688" y="105" width="1" height="1" fill="#394048"/>
<rect x="693" y="90" width="1" height="18" fill="#f07f3c"/>
<rect x="692" y="98" width="3" height="7" fill="#f07f3c"/>
<rect x="693" y="99" width="1" height="5" fill="#f6a56c"/>
<rect x="698" y="93" width="1" height="51" fill="#f07f3c"/>
<rect x="697" y="97" width="3" height="38" fill="#f07f3c"/>
<rect x="698" y="98" width="1" height="36" fill="#394048"/>
<rect x="703" y="130" width="1" height="17" fill="#f07f3c"/>
<rect x="702" y="134" width="3" height="7" fill="#f07f3c"/>
<rect x="703" y="135" width="1" height="5" fill="#394048"/>
<rect x="708" y="133" width="1" height="14" fill="#f07f3c"/>
<rect x="707" y="138" width="3" height="2" fill="#f07f3c"/>
<rect x="713" y="134" width="1" height="15" fill="#f07f3c"/>
<rect x="712" y="137" width="3" height="8" fill="#f07f3c"/>
<rect x="713" y="138" width="1" height="6" fill="#394048"/>
<rect x="718" y="124" width="1" height="27" fill="#f07f3c"/>
<rect x="717" y="140" width="3" height="4" fill="#f07f3c"/>
<rect x="718" y="141" width="1" height="2" fill="#f6a56c"/>
<rect x="723" y="117" width="1" height="29" fill="#f07f3c"/>
<rect x="722" y="139" width="3" height="3" fill="#f07f3c"/>
<rect x="723" y="140" width="1" height="1" fill="#394048"/>
<rect x="728" y="114" width="1" height="50" fill="#f07f3c"/>
<rect x="727" y="120" width="3" height="21" fill="#f07f3c"/>
<rect x="728" y="121" width="1" height="19" fill="#f6a56c"/>
<rect x="733" y="114" width="1" height="19" fill="#f07f3c"/>
<rect x="732" y="119" width="3" height="7" fill="#f07f3c"/>
<rect x="733" y="120" width="1" height="5" fill="#394048"/>
<rect x="738" y="118" width="1" height="12" fill="#f07f3c"/>
<rect x="737" y="127" width="3" height="2" fill="#f07f3c"/>
<rect x="743" y="114" width="1" height="19" fill="#f07f3c"/>
<rect x="742" y="118" width="3" height="10" fill="#f07f3c"/>
<rect x="743" y="119" width="1" height="8" fill="#f6a56c"/>
<rect x="748" y="106" width="1" height="24" fill="#f07f3c"/>
<rect x="747" y="112" width="3" height="6" fill="#f07f3c"/>
<rect x="748" y="113" width="1" height="4" fill="#f6a56c"/>
<rect x="753" y="91" width="1" height="29" fill="#f07f3c"/>
<rect x="752" y="111" width="3" height="7" fill="#f07f3c"/>
<rect x="753" y="112" width="1" height="5" fill="#394048"/>
<rect x="758" y="98" width="1" height="24" fill="#f07f3c"/>
<rect x="757" y="111" width="3" height="7" fill="#f07f3c"/>
<rect x="758" y="112" width="1" height="5" fill="#f6a56c"/>
<rect x="763" y="108" width="1" height="18" fill="#f07f3c"/>
<rect x="762" y="110" width="3" height="15" fill="#f07f3c"/>
<rect x="763" y="111" width="1" height="13" fill="#394048"/>
<rect x="768" y="111" width="1" height="14" fill="#f07f3c"/>
<rect x="767" y="118" width="3" height="3" fill="#f07f3c"/>
<rect x="768" y="119" width="1" height="1" fill="#f6a56c"/>
<rect x="773" y="114" width="1" height="20" fill="#f07f3c"/>
<rect x="772" y="117" width="3" height="14" fill="#f07f3c"/>
<rect x="773" y="118" width="1" height="12" fill="#394048"/>
<rect x="778" y="121" width="1" height="33" fill="#f07f3c"/>
<rect x="777" y="130" width="3" height="7" fill="#f07f3c"/>
<rect x="778" y="131" width="1" height="5" fill="#394048"/>
<rect x="783" y="120" width="1" height="27" fill="#f07f3c"/>
<rect x="782" y="127" width="3" height="8" fill="#f07f3c"/>
<rect x="783" y="128" width="1" height="6" fill="#f6a56c"/>
<rect x="788" y="120" width="1" height="46" fill="#f07f3c"/>
<rect x="787" y="124" width="3" height="41" fill="#f07f3c"/>
<rect x="788" y="125" width="1" height="39" fill="#394048"/>
<rect x="792" y="155" width="1" height="19" fill="#f07f3c"/>
<rect x="791" y="161" width="3" height="3" fill="#f07f3c"/>
<rect x="792" y="162" width="1" height="1" fill="#f6a56c"/>
<rect x="797" y="154" width="1" height="20" fill="#f07f3c"/>
<rect x="796" y="160" width="3" height="8" fill="#f07f3c"/>
<rect x="797" y="161" width="1" height="6" fill="#394048"/>
<rect x="802" y="153" width="1" height="16" fill="#f07f3c"/>
<rect x="801" y="158" width="3" height="9" fill="#f07f3c"/>
<rect x="802" y="159" width="1" height="7" fill="#f6a56c"/>
<rect x="807" y="133" width="1" height="30" fill="#f07f3c"/>
<rect x="806" y="146" width="3" height="12" fill="#f07f3c"/>
<rect x="807" y="147" width="1" height="10" fill="#f6a56c"/>
<rect x="812" y="128" width="1" height="51" fill="#f07f3c"/>
<rect x="811" y="145" width="3" height="33" fill="#f07f3c"/>
<rect x="812" y="146" width="1" height="31" fill="#394048"/>
<rect x="817" y="158" width="1" height="31" fill="#f07f3c"/>
<rect x="816" y="176" width="3" height="12" fill="#f07f3c"/>
<rect x="817" y="177" width="1" height="10" fill="#394048"/>
<rect x="822" y="169" width="1" height="23" fill="#f07f3c"/>
<rect x="821" y="175" width="3" height="12" fill="#f07f3c"/>
<rect x="822" y="176" width="1" height="10" fill="#f6a56c"/>
<rect x="827" y="163" width="1" height="20" fill="#f07f3c"/>
<rect x="826" y="166" width="3" height="9" fill="#f07f3c"/>
<rect x="827" y="167" width="1" height="7" fill="#f6a56c"/>
<rect x="832" y="163" width="1" height="16" fill="#f07f3c"/>
<rect x="831" y="165" width="3" height="4" fill="#f07f3c"/>
<rect x="832" y="166" width="1" height="2" fill="#394048"/>
<rect x="837" y="156" width="1" height="33" fill="#f07f3c"/>
<rect x="836" y="168" width="3" height="18" fill="#f07f3c"/>
<rect x="837" y="169" width="1" height="16" fill="#394048"/>
<rect x="842" y="151" width="1" height="36" fill="#f07f3c"/>
<rect x="841" y="161" width="3" height="24" fill="#f07f3c"/>
<rect x="842" y="162" width="1" height="22" fill="#f6a56c"/>
<rect x="847" y="148" width="1" height="44" fill="#f07f3c"/>
<rect x="846" y="160" width="3" height="31" fill="#f07f3c"/>
<rect x="847" y="161" width="1" height="29" fill="#394048"/>
<rect x="852" y="157" width="1" height="66" fill="#f07f3c"/>
<rect x="851" y="190" width="3" height="30" fill="#f07f3c"/>
<rect x="852" y="191" width="1" height="28" fill="#394048"/>
<rect x="857" y="214" width="1" height="12" fill="#f07f3c"/>
<rect x="856" y="219" width="3" height="6" fill="#f07f3c"/>
<rect x="857" y="220" width="1" height="4" fill="#394048"/>
<rect x="862" y="218" width="1" height="16" fill="#f07f3c"/>
<rect x="861" y="224" width="3" height="5" fill="#f07f3c"/>
<rect x="862" y="225" width="1" height="3" fill="#394048"/>
</g>
<rect x="17" y="230" width="882" height="1" fill="#e6e8ea" shape-rendering="crispEdges"/>
<rect x="17" y="240" width="882" height="2" fill="#22ac22" shape-rendering="crispEdges"/>
</g>
<rect x="17.5" y="39.5" width="882" height="224" fill="none" stroke="#aab7c4" stroke-width="1" shape-rendering="crispEdges"/>
<!-- legend -->
<g clip-path="url(#cmain)"><text x="20" y="51" font-size="10" textLength="133" lengthAdjust="spacingAndGlyphs" fill="#2222e8" style="font-family:'Liberation Sans',sans-serif">Exponential_Moving_Average</text>
<text x="157" y="51" font-size="10" textLength="135" lengthAdjust="spacingAndGlyphs" fill="#e8202a" style="font-family:'Liberation Sans',sans-serif">Exponential_Moving_Average</text></g>
<rect x="17" y="39" width="31" height="22" fill="#f3f1f1"/>
<rect x="17" y="39" width="31" height="5" fill="#d6d4d4"/>
<rect x="21.5" y="47.5" width="9" height="9" rx="1.5" fill="url(#gred)" stroke="#a01818" stroke-width="1"/>
<rect x="34.5" y="47.5" width="9" height="9" rx="1.5" fill="url(#gblue)" stroke="#1a5c94" stroke-width="1"/>
<!-- y axis main -->
<g shape-rendering="crispEdges">
<rect x="899" y="66" width="4" height="1" fill="#aab7c4"/>
<rect x="899" y="118" width="4" height="1" fill="#aab7c4"/>
<rect x="899" y="169" width="4" height="1" fill="#aab7c4"/>
<rect x="899" y="220" width="48" height="21" fill="#ffffff"/>
</g>
<g font-size="11" fill="#f6f6f6" stroke="#f6f6f6" stroke-width="0.25" style="font-family:'Liberation Sans',sans-serif">
<text x="906" y="73">0.9250</text>
<text x="906" y="124.5">0.9200</text>
<text x="906" y="176">0.9150</text>
<text x="907.5" y="234.5" fill="#4a4e5a" stroke="#4a4e5a" stroke-width="0.1">0.9091</text>
</g>
<!-- MACD panel -->
<g shape-rendering="crispEdges">
<line x1="25.5" y1="269" x2="25.5" y2="339" stroke="#727b86" stroke-width="1" stroke-dasharray="3,3"/>
<line x1="55.5" y1="269" x2="55.5" y2="339" stroke="#727b86" stroke-width="1" stroke-dasharray="3,3"/>
<line x1="84.5" y1="269" x2="84.5" y2="339" stroke="#727b86" stroke-width="1" stroke-dasharray="3,3"/>
<line x1="114.5" y1="269" x2="114.5" y2="339" stroke="#727b86" stroke-width="1" stroke-dasharray="3,3"/>
<line x1="144.5" y1="269" x2="144.5" y2="339" stroke="#727b86" stroke-width="1" stroke-dasharray="3,3"/>
<line x1="173.5" y1="269" x2="173.5" y2="339" stroke="#727b86" stroke-width="1" stroke-dasharray="3,3"/>
<line x1="203.5" y1="269" x2="203.5" y2="339" stroke="#727b86" stroke-width="1" stroke-dasharray="3,3"/>
<line x1="233.5" y1="269" x2="233.5" y2="339" stroke="#727b86" stroke-width="1" stroke-dasharray="3,3"/>
<rect x="263" y="269" width="1" height="70" fill="#7f8a96"/>
<line x1="292.5" y1="269" x2="292.5" y2="339" stroke="#727b86" stroke-width="1" stroke-dasharray="3,3"/>
<line x1="322.5" y1="269" x2="322.5" y2="339" stroke="#727b86" stroke-width="1" stroke-dasharray="3,3"/>
<line x1="352.5" y1="269" x2="352.5" y2="339" stroke="#727b86" stroke-width="1" stroke-dasharray="3,3"/>
<line x1="381.5" y1="269" x2="381.5" y2="339" stroke="#727b86" stroke-width="1" stroke-dasharray="3,3"/>
<line x1="411.5" y1="269" x2="411.5" y2="339" stroke="#727b86" stroke-width="1" stroke-dasharray="3,3"/>
<line x1="441.5" y1="269" x2="441.5" y2="339" stroke="#727b86" stroke-width="1" stroke-dasharray="3,3"/>
<line x1="471.5" y1="269" x2="471.5" y2="339" stroke="#727b86" stroke-width="1" stroke-dasharray="3,3"/>
<line x1="500.5" y1="269" x2="500.5" y2="339" stroke="#727b86" stroke-width="1" stroke-dasharray="3,3"/>
<line x1="530.5" y1="269" x2="530.5" y2="339" stroke="#727b86" stroke-width="1" stroke-dasharray="3,3"/>
<line x1="560.5" y1="269" x2="560.5" y2="339" stroke="#727b86" stroke-width="1" stroke-dasharray="3,3"/>
<line x1="589.5" y1="269" x2="589.5" y2="339" stroke="#727b86" stroke-width="1" stroke-dasharray="3,3"/>
<line x1="619.5" y1="269" x2="619.5" y2="339" stroke="#727b86" stroke-width="1" stroke-dasharray="3,3"/>
<line x1="649.5" y1="269" x2="649.5" y2="339" stroke="#727b86" stroke-width="1" stroke-dasharray="3,3"/>
<line x1="679.5" y1="269" x2="679.5" y2="339" stroke="#727b86" stroke-width="1" stroke-dasharray="3,3"/>
<line x1="708.5" y1="269" x2="708.5" y2="339" stroke="#727b86" stroke-width="1" stroke-dasharray="3,3"/>
<line x1="738.5" y1="269" x2="738.5" y2="339" stroke="#727b86" stroke-width="1" stroke-dasharray="3,3"/>
<line x1="768.5" y1="269" x2="768.5" y2="339" stroke="#727b86" stroke-width="1" stroke-dasharray="3,3"/>
<line x1="797.5" y1="269" x2="797.5" y2="339" stroke="#727b86" stroke-width="1" stroke-dasharray="3,3"/>
<line x1="827.5" y1="269" x2="827.5" y2="339" stroke="#727b86" stroke-width="1" stroke-dasharray="3,3"/>
<line x1="857.5" y1="269" x2="857.5" y2="339" stroke="#727b86" stroke-width="1" stroke-dasharray="3,3"/>
<line x1="887.5" y1="269" x2="887.5" y2="339" stroke="#727b86" stroke-width="1" stroke-dasharray="3,3"/>
<line x1="17" y1="289.5" x2="899" y2="289.5" stroke="#727b86" stroke-width="1" stroke-dasharray="3,3"/><line x1="17" y1="321.5" x2="899" y2="321.5" stroke="#727b86" stroke-width="1" stroke-dasharray="3,3"/>
<rect x="899" y="289" width="4" height="1" fill="#aab7c4"/>
<rect x="899" y="321" width="4" height="1" fill="#aab7c4"/>
</g>
<g clip-path="url(#cmacd)">
<rect x="20" y="312.2" width="2" height="8.8" fill="#c02428" fill-opacity="0.85"/>
<rect x="25" y="313.4" width="2" height="7.6" fill="#c02428" fill-opacity="0.85"/>
<rect x="30" y="314.1" width="2" height="6.9" fill="#c02428" fill-opacity="0.85"/>
<rect x="35" y="316.4" width="2" height="4.6" fill="#c02428" fill-opacity="0.85"/>
<rect x="40" y="317.7" width="2" height="3.3" fill="#c02428" fill-opacity="0.85"/>
<rect x="45" y="318.5" width="2" height="2.5" fill="#c02428" fill-opacity="0.85"/>
<rect x="50" y="319.2" width="2" height="1.8" fill="#c02428" fill-opacity="0.85"/>
<rect x="55" y="320.1" width="2" height="0.9" fill="#c02428" fill-opacity="0.85"/>
<rect x="65" y="321" width="2" height="0.7" fill="#c02428" fill-opacity="0.85"/>
<rect x="69" y="321" width="2" height="1.1" fill="#c02428" fill-opacity="0.85"/>
<rect x="74" y="321" width="2" height="1.6" fill="#c02428" fill-opacity="0.85"/>
<rect x="79" y="321" width="2" height="2.1" fill="#c02428" fill-opacity="0.85"/>
<rect x="84" y="321" width="2" height="2.5" fill="#c02428" fill-opacity="0.85"/>
<rect x="89" y="321" width="2" height="3.0" fill="#c02428" fill-opacity="0.85"/>
<rect x="94" y="321" width="2" height="3.0" fill="#c02428" fill-opacity="0.85"/>
<rect x="99" y="321" width="2" height="3.1" fill="#c02428" fill-opacity="0.85"/>
<rect x="104" y="321" width="2" height="3.3" fill="#c02428" fill-opacity="0.85"/>
<rect x="109" y="321" width="2" height="3.4" fill="#c02428" fill-opacity="0.85"/>
<rect x="114" y="321" width="2" height="3.6" fill="#c02428" fill-opacity="0.85"/>
<rect x="119" y="321" width="2" height="3.4" fill="#c02428" fill-opacity="0.85"/>
<rect x="124" y="321" width="2" height="3.5" fill="#c02428" fill-opacity="0.85"/>
<rect x="129" y="321" width="2" height="3.6" fill="#c02428" fill-opacity="0.85"/>
<rect x="134" y="321" width="2" height="3.8" fill="#c02428" fill-opacity="0.85"/>
<rect x="139" y="321" width="2" height="3.7" fill="#c02428" fill-opacity="0.85"/>
<rect x="144" y="321" width="2" height="3.6" fill="#c02428" fill-opacity="0.85"/>
<rect x="149" y="321" width="2" height="3.7" fill="#c02428" fill-opacity="0.85"/>
<rect x="154" y="321" width="2" height="3.9" fill="#c02428" fill-opacity="0.85"/>
<rect x="159" y="321" width="2" height="4.2" fill="#c02428" fill-opacity="0.85"/>
<rect x="164" y="321" width="2" height="4.5" fill="#c02428" fill-opacity="0.85"/>
<rect x="169" y="321" width="2" height="4.7" fill="#c02428" fill-opacity="0.85"/>
<rect x="173" y="321" width="2" height="5.0" fill="#c02428" fill-opacity="0.85"/>
<rect x="178" y="321" width="2" height="5.3" fill="#c02428" fill-opacity="0.85"/>
<rect x="183" y="321" width="2" height="5.6" fill="#c02428" fill-opacity="0.85"/>
<rect x="188" y="321" width="2" height="4.5" fill="#c02428" fill-opacity="0.85"/>
<rect x="193" y="321" width="2" height="3.3" fill="#c02428" fill-opacity="0.85"/>
<rect x="198" y="321" width="2" height="2.7" fill="#c02428" fill-opacity="0.85"/>
<rect x="203" y="321" width="2" height="2.2" fill="#c02428" fill-opacity="0.85"/>
<rect x="208" y="321" width="2" height="1.7" fill="#c02428" fill-opacity="0.85"/>
<rect x="213" y="321" width="2" height="1.5" fill="#c02428" fill-opacity="0.85"/>
<rect x="218" y="321" width="2" height="1.3" fill="#c02428" fill-opacity="0.85"/>
<rect x="223" y="321" width="2" height="1.3" fill="#c02428" fill-opacity="0.85"/>
<rect x="228" y="321" width="2" height="1.3" fill="#c02428" fill-opacity="0.85"/>
<rect x="233" y="321" width="2" height="1.3" fill="#c02428" fill-opacity="0.85"/>
<rect x="238" y="321" width="2" height="1.3" fill="#c02428" fill-opacity="0.85"/>
<rect x="243" y="321" width="2" height="1.0" fill="#c02428" fill-opacity="0.85"/>
<rect x="248" y="321" width="2" height="0.8" fill="#c02428" fill-opacity="0.85"/>
<rect x="312" y="321" width="2" height="0.6" fill="#c02428" fill-opacity="0.85"/>
<rect x="317" y="321" width="2" height="2.2" fill="#c02428" fill-opacity="0.85"/>
<rect x="322" y="321" width="2" height="3.6" fill="#c02428" fill-opacity="0.85"/>
<rect x="327" y="321" width="2" height="3.8" fill="#c02428" fill-opacity="0.85"/>
<rect x="332" y="321" width="2" height="4.0" fill="#c02428" fill-opacity="0.85"/>
<rect x="337" y="321" width="2" height="4.1" fill="#c02428" fill-opacity="0.85"/>
<rect x="342" y="321" width="2" height="4.3" fill="#c02428" fill-opacity="0.85"/>
<rect x="347" y="321" width="2" height="4.4" fill="#c02428" fill-opacity="0.85"/>
<rect x="352" y="321" width="2" height="4.6" fill="#c02428" fill-opacity="0.85"/>
<rect x="357" y="321" width="2" height="4.1" fill="#c02428" fill-opacity="0.85"/>
<rect x="362" y="321" width="2" height="3.7" fill="#c02428" fill-opacity="0.85"/>
<rect x="367" y="321" width="2" height="3.4" fill="#c02428" fill-opacity="0.85"/>
<rect x="372" y="321" width="2" height="3.0" fill="#c02428" fill-opacity="0.85"/>
<rect x="376" y="321" width="2" height="2.7" fill="#c02428" fill-opacity="0.85"/>
<rect x="381" y="321" width="2" height="2.3" fill="#c02428" fill-opacity="0.85"/>
<rect x="386" y="321" width="2" height="2.2" fill="#c02428" fill-opacity="0.85"/>
<rect x="391" y="321" width="2" height="2.1" fill="#c02428" fill-opacity="0.85"/>
<rect x="396" y="321" width="2" height="2.0" fill="#c02428" fill-opacity="0.85"/>
<rect x="401" y="321" width="2" height="1.7" fill="#c02428" fill-opacity="0.85"/>
<rect x="406" y="321" width="2" height="1.3" fill="#c02428" fill-opacity="0.85"/>
<rect x="411" y="321" width="2" height="0.9" fill="#c02428" fill-opacity="0.85"/>
<rect x="421" y="321" width="2" height="1.1" fill="#c02428" fill-opacity="0.85"/>
<rect x="426" y="321" width="2" height="2.0" fill="#c02428" fill-opacity="0.85"/>
<rect x="431" y="321" width="2" height="2.8" fill="#c02428" fill-opacity="0.85"/>
<rect x="436" y="321" width="2" height="3.7" fill="#c02428" fill-opacity="0.85"/>
<rect x="441" y="321" width="2" height="4.5" fill="#c02428" fill-opacity="0.85"/>
<rect x="446" y="321" width="2" height="5.1" fill="#c02428" fill-opacity="0.85"/>
<rect x="451" y="321" width="2" height="5.7" fill="#c02428" fill-opacity="0.85"/>
<rect x="456" y="321" width="2" height="6.3" fill="#c02428" fill-opacity="0.85"/>
<rect x="461" y="321" width="2" height="6.6" fill="#c02428" fill-opacity="0.85"/>
<rect x="466" y="321" width="2" height="6.6" fill="#c02428" fill-opacity="0.85"/>
<rect x="471" y="321" width="2" height="6.5" fill="#c02428" fill-opacity="0.85"/>
<rect x="476" y="321" width="2" height="6.5" fill="#c02428" fill-opacity="0.85"/>
<rect x="480" y="321" width="2" height="6.6" fill="#c02428" fill-opacity="0.85"/>
<rect x="485" y="321" width="2" height="6.0" fill="#c02428" fill-opacity="0.85"/>
<rect x="490" y="321" width="2" height="5.3" fill="#c02428" fill-opacity="0.85"/>
<rect x="495" y="321" width="2" height="4.5" fill="#c02428" fill-opacity="0.85"/>
<rect x="500" y="321" width="2" height="3.7" fill="#c02428" fill-opacity="0.85"/>
<rect x="505" y="321" width="2" height="2.9" fill="#c02428" fill-opacity="0.85"/>
<rect x="510" y="321" width="2" height="2.2" fill="#c02428" fill-opacity="0.85"/>
<rect x="515" y="321" width="2" height="1.7" fill="#c02428" fill-opacity="0.85"/>
<rect x="520" y="321" width="2" height="1.3" fill="#c02428" fill-opacity="0.85"/>
<rect x="525" y="321" width="2" height="1.0" fill="#c02428" fill-opacity="0.85"/>
<rect x="530" y="321" width="2" height="0.6" fill="#c02428" fill-opacity="0.85"/>
<rect x="565" y="321" width="2" height="0.9" fill="#c02428" fill-opacity="0.85"/>
<rect x="570" y="321" width="2" height="1.3" fill="#c02428" fill-opacity="0.85"/>
<rect x="575" y="321" width="2" height="1.2" fill="#c02428" fill-opacity="0.85"/>
<rect x="580" y="321" width="2" height="1.2" fill="#c02428" fill-opacity="0.85"/>
<rect x="584" y="321" width="2" height="1.1" fill="#c02428" fill-opacity="0.85"/>
<rect x="589" y="321" width="2" height="1.1" fill="#c02428" fill-opacity="0.85"/>
<rect x="594" y="321" width="2" height="1.0" fill="#c02428" fill-opacity="0.85"/>
<rect x="609" y="320.0" width="2" height="1.0" fill="#c02428" fill-opacity="0.85"/>
<rect x="614" y="319.3" width="2" height="1.7" fill="#c02428" fill-opacity="0.85"/>
<rect x="619" y="318.5" width="2" height="2.5" fill="#c02428" fill-opacity="0.85"/>
<rect x="624" y="318.8" width="2" height="2.2" fill="#c02428" fill-opacity="0.85"/>
<rect x="629" y="319.2" width="2" height="1.8" fill="#c02428" fill-opacity="0.85"/>
<rect x="634" y="319.4" width="2" height="1.6" fill="#c02428" fill-opacity="0.85"/>
<rect x="639" y="319.7" width="2" height="1.3" fill="#c02428" fill-opacity="0.85"/>
<rect x="644" y="320.0" width="2" height="1.0" fill="#c02428" fill-opacity="0.85"/>
<rect x="649" y="320.1" width="2" height="0.9" fill="#c02428" fill-opacity="0.85"/>
<rect x="654" y="320.0" width="2" height="1.0" fill="#c02428" fill-opacity="0.85"/>
<rect x="659" y="319.9" width="2" height="1.1" fill="#c02428" fill-opacity="0.85"/>
<rect x="664" y="319.8" width="2" height="1.2" fill="#c02428" fill-opacity="0.85"/>
<rect x="669" y="319.8" width="2" height="1.2" fill="#c02428" fill-opacity="0.85"/>
<rect x="674" y="319.7" width="2" height="1.3" fill="#c02428" fill-opacity="0.85"/>
<rect x="679" y="319.6" width="2" height="1.4" fill="#c02428" fill-opacity="0.85"/>
<rect x="684" y="319.5" width="2" height="1.5" fill="#c02428" fill-opacity="0.85"/>
<rect x="688" y="319.3" width="2" height="1.7" fill="#c02428" fill-opacity="0.85"/>
<rect x="693" y="319.0" width="2" height="2.0" fill="#c02428" fill-opacity="0.85"/>
<rect x="698" y="320.1" width="2" height="0.9" fill="#c02428" fill-opacity="0.85"/>
<rect x="708" y="321" width="2" height="1.2" fill="#c02428" fill-opacity="0.85"/>
<rect x="713" y="321" width="2" height="1.3" fill="#c02428" fill-opacity="0.85"/>
<rect x="718" y="321" width="2" height="1.0" fill="#c02428" fill-opacity="0.85"/>
<rect x="723" y="321" width="2" height="0.7" fill="#c02428" fill-opacity="0.85"/>
<rect x="743" y="321" width="2" height="0.7" fill="#c02428" fill-opacity="0.85"/>
<rect x="748" y="321" width="2" height="0.6" fill="#c02428" fill-opacity="0.85"/>
<rect x="792" y="321" width="2" height="1.8" fill="#c02428" fill-opacity="0.85"/>
<rect x="797" y="321" width="2" height="3.3" fill="#c02428" fill-opacity="0.85"/>
<rect x="802" y="321" width="2" height="3.5" fill="#c02428" fill-opacity="0.85"/>
<rect x="807" y="321" width="2" height="3.6" fill="#c02428" fill-opacity="0.85"/>
<rect x="812" y="321" width="2" height="3.6" fill="#c02428" fill-opacity="0.85"/>
<rect x="817" y="321" width="2" height="3.6" fill="#c02428" fill-opacity="0.85"/>
<rect x="822" y="321" width="2" height="3.7" fill="#c02428" fill-opacity="0.85"/>
<rect x="827" y="321" width="2" height="3.7" fill="#c02428" fill-opacity="0.85"/>
<rect x="832" y="321" width="2" height="3.6" fill="#c02428" fill-opacity="0.85"/>
<rect x="837" y="321" width="2" height="3.5" fill="#c02428" fill-opacity="0.85"/>
<rect x="842" y="321" width="2" height="3.4" fill="#c02428" fill-opacity="0.85"/>
<rect x="847" y="321" width="2" height="3.6" fill="#c02428" fill-opacity="0.85"/>
<rect x="852" y="321" width="2" height="4.3" fill="#c02428" fill-opacity="0.85"/>
<rect x="857" y="321" width="2" height="5.1" fill="#c02428" fill-opacity="0.85"/>
<rect x="862" y="321" width="2" height="5.9" fill="#c02428" fill-opacity="0.85"/>
<path d="M17.3,279.6 L30.0,276.0 L49.6,274.4 L72.5,276.5 L93.0,280.6 L114.0,285.8 L135.0,289.0 L156.0,294.0 L183.0,301.5 L197.5,300.8 L218.0,300.4 L239.0,300.8 L281.7,296.2 L308.8,296.2 L321.0,302.0 L352.5,308.8 L396.0,309.8 L417.0,308.8 L438.0,318.0 L458.8,327.5 L479.6,333.8 L480.4,334.0 L511.7,334.8 L543.0,330.0 L570.0,332.7 L595.0,329.6 L620.0,322.3 L647.0,321.7 L678.0,318.0 L693.0,316.0 L709.6,318.8 L741.7,320.2 L773.0,318.8 L788.0,319.8 L795.0,324.4 L825.0,328.5 L845.8,331.2 L862.5,336.9" stroke="#12128a" stroke-width="1.3" fill="none"/>
<circle cx="20.5" cy="288.4" r="1.6" fill="#e8262c"/>
<circle cx="25.5" cy="285.6" r="1.6" fill="#e8262c"/>
<circle cx="30.5" cy="283.5" r="1.6" fill="#e8262c"/>
<circle cx="35.5" cy="280.3" r="1.6" fill="#e8262c"/>
<circle cx="40.5" cy="278.6" r="1.6" fill="#e8262c"/>
<circle cx="45.5" cy="277.4" r="1.6" fill="#e8262c"/>
<circle cx="50.5" cy="276.3" r="1.6" fill="#e8262c"/>
<circle cx="55.5" cy="275.8" r="1.6" fill="#e8262c"/>
<circle cx="60.5" cy="275.3" r="1.6" fill="#e8262c"/>
<circle cx="65.5" cy="275.0" r="1.6" fill="#e8262c"/>
<circle cx="69.5" cy="275.0" r="1.6" fill="#e8262c"/>
<circle cx="74.5" cy="275.0" r="1.6" fill="#e8262c"/>
<circle cx="79.5" cy="275.5" r="1.6" fill="#e8262c"/>
<circle cx="84.5" cy="276.0" r="1.6" fill="#e8262c"/>
<circle cx="89.5" cy="276.6" r="1.6" fill="#e8262c"/>
<circle cx="94.5" cy="277.7" r="1.6" fill="#e8262c"/>
<circle cx="99.5" cy="278.7" r="1.6" fill="#e8262c"/>
<circle cx="104.5" cy="279.8" r="1.6" fill="#e8262c"/>
<circle cx="109.5" cy="280.9" r="1.6" fill="#e8262c"/>
<circle cx="114.5" cy="281.9" r="1.6" fill="#e8262c"/>
<circle cx="119.5" cy="282.9" r="1.6" fill="#e8262c"/>
<circle cx="124.5" cy="283.5" r="1.6" fill="#e8262c"/>
<circle cx="129.5" cy="284.1" r="1.6" fill="#e8262c"/>
<circle cx="134.5" cy="284.7" r="1.6" fill="#e8262c"/>
<circle cx="139.5" cy="286.0" r="1.6" fill="#e8262c"/>
<circle cx="144.5" cy="287.3" r="1.6" fill="#e8262c"/>
<circle cx="149.5" cy="288.3" r="1.6" fill="#e8262c"/>
<circle cx="154.5" cy="289.3" r="1.6" fill="#e8262c"/>
<circle cx="159.5" cy="290.3" r="1.6" fill="#e8262c"/>
<circle cx="164.5" cy="291.4" r="1.6" fill="#e8262c"/>
<circle cx="169.5" cy="292.4" r="1.6" fill="#e8262c"/>
<circle cx="173.5" cy="293.3" r="1.6" fill="#e8262c"/>
<circle cx="178.5" cy="294.4" r="1.6" fill="#e8262c"/>
<circle cx="183.5" cy="295.4" r="1.6" fill="#e8262c"/>
<circle cx="188.5" cy="296.4" r="1.6" fill="#e8262c"/>
<circle cx="193.5" cy="297.3" r="1.6" fill="#e8262c"/>
<circle cx="198.5" cy="297.8" r="1.6" fill="#e8262c"/>
<circle cx="203.5" cy="298.3" r="1.6" fill="#e8262c"/>
<circle cx="208.5" cy="298.8" r="1.6" fill="#e8262c"/>
<circle cx="213.5" cy="298.9" r="1.6" fill="#e8262c"/>
<circle cx="218.5" cy="299.0" r="1.6" fill="#e8262c"/>
<circle cx="223.5" cy="299.1" r="1.6" fill="#e8262c"/>
<circle cx="228.5" cy="299.2" r="1.6" fill="#e8262c"/>
<circle cx="233.5" cy="299.3" r="1.6" fill="#e8262c"/>
<circle cx="238.5" cy="299.4" r="1.6" fill="#e8262c"/>
<circle cx="243.5" cy="299.2" r="1.6" fill="#e8262c"/>
<circle cx="248.5" cy="299.0" r="1.6" fill="#e8262c"/>
<circle cx="253.5" cy="298.7" r="1.6" fill="#e8262c"/>
<circle cx="258.5" cy="298.4" r="1.6" fill="#e8262c"/>
<circle cx="263.5" cy="298.1" r="1.6" fill="#e8262c"/>
<circle cx="268.5" cy="297.7" r="1.6" fill="#e8262c"/>
<circle cx="272.5" cy="297.3" r="1.6" fill="#e8262c"/>
<circle cx="277.5" cy="296.9" r="1.6" fill="#e8262c"/>
<circle cx="282.5" cy="296.5" r="1.6" fill="#e8262c"/>
<circle cx="287.5" cy="296.3" r="1.6" fill="#e8262c"/>
<circle cx="292.5" cy="296.4" r="1.6" fill="#e8262c"/>
<circle cx="297.5" cy="296.5" r="1.6" fill="#e8262c"/>
<circle cx="302.5" cy="296.6" r="1.6" fill="#e8262c"/>
<circle cx="307.5" cy="296.7" r="1.6" fill="#e8262c"/>
<circle cx="312.5" cy="297.1" r="1.6" fill="#e8262c"/>
<circle cx="317.5" cy="297.7" r="1.6" fill="#e8262c"/>
<circle cx="322.5" cy="298.2" r="1.6" fill="#e8262c"/>
<circle cx="327.5" cy="299.1" r="1.6" fill="#e8262c"/>
<circle cx="332.5" cy="300.0" r="1.6" fill="#e8262c"/>
<circle cx="337.5" cy="300.9" r="1.6" fill="#e8262c"/>
<circle cx="342.5" cy="301.8" r="1.6" fill="#e8262c"/>
<circle cx="347.5" cy="302.7" r="1.6" fill="#e8262c"/>
<circle cx="352.5" cy="303.6" r="1.6" fill="#e8262c"/>
<circle cx="357.5" cy="304.3" r="1.6" fill="#e8262c"/>
<circle cx="362.5" cy="304.9" r="1.6" fill="#e8262c"/>
<circle cx="367.5" cy="305.4" r="1.6" fill="#e8262c"/>
<circle cx="372.5" cy="306.0" r="1.6" fill="#e8262c"/>
<circle cx="376.5" cy="306.4" r="1.6" fill="#e8262c"/>
<circle cx="381.5" cy="307.0" r="1.6" fill="#e8262c"/>
<circle cx="386.5" cy="307.2" r="1.6" fill="#e8262c"/>
<circle cx="391.5" cy="307.4" r="1.6" fill="#e8262c"/>
<circle cx="396.5" cy="307.5" r="1.6" fill="#e8262c"/>
<circle cx="401.5" cy="307.7" r="1.6" fill="#e8262c"/>
<circle cx="406.5" cy="307.9" r="1.6" fill="#e8262c"/>
<circle cx="411.5" cy="308.1" r="1.6" fill="#e8262c"/>
<circle cx="416.5" cy="308.3" r="1.6" fill="#e8262c"/>
<circle cx="421.5" cy="309.4" r="1.6" fill="#e8262c"/>
<circle cx="426.5" cy="310.7" r="1.6" fill="#e8262c"/>
<circle cx="431.5" cy="311.9" r="1.6" fill="#e8262c"/>
<circle cx="436.5" cy="313.1" r="1.6" fill="#e8262c"/>
<circle cx="441.5" cy="314.5" r="1.6" fill="#e8262c"/>
<circle cx="446.5" cy="316.1" r="1.6" fill="#e8262c"/>
<circle cx="451.5" cy="317.8" r="1.6" fill="#e8262c"/>
<circle cx="456.5" cy="319.5" r="1.6" fill="#e8262c"/>
<circle cx="461.5" cy="321.0" r="1.6" fill="#e8262c"/>
<circle cx="466.5" cy="322.5" r="1.6" fill="#e8262c"/>
<circle cx="471.5" cy="324.1" r="1.6" fill="#e8262c"/>
<circle cx="476.5" cy="325.6" r="1.6" fill="#e8262c"/>
<circle cx="480.5" cy="326.7" r="1.6" fill="#e8262c"/>
<circle cx="485.5" cy="327.6" r="1.6" fill="#e8262c"/>
<circle cx="490.5" cy="328.4" r="1.6" fill="#e8262c"/>
<circle cx="495.5" cy="329.4" r="1.6" fill="#e8262c"/>
<circle cx="500.5" cy="330.4" r="1.6" fill="#e8262c"/>
<circle cx="505.5" cy="331.5" r="1.6" fill="#e8262c"/>
<circle cx="510.5" cy="332.5" r="1.6" fill="#e8262c"/>
<circle cx="515.5" cy="332.4" r="1.6" fill="#e8262c"/>
<circle cx="520.5" cy="332.0" r="1.6" fill="#e8262c"/>
<circle cx="525.5" cy="331.6" r="1.6" fill="#e8262c"/>
<circle cx="530.5" cy="331.2" r="1.6" fill="#e8262c"/>
<circle cx="535.5" cy="330.9" r="1.6" fill="#e8262c"/>
<circle cx="540.5" cy="330.6" r="1.6" fill="#e8262c"/>
<circle cx="545.5" cy="330.7" r="1.6" fill="#e8262c"/>
<circle cx="550.5" cy="330.8" r="1.6" fill="#e8262c"/>
<circle cx="555.5" cy="330.9" r="1.6" fill="#e8262c"/>
<circle cx="560.5" cy="331.1" r="1.6" fill="#e8262c"/>
<circle cx="565.5" cy="331.2" r="1.6" fill="#e8262c"/>
<circle cx="570.5" cy="331.2" r="1.6" fill="#e8262c"/>
<circle cx="575.5" cy="330.6" r="1.6" fill="#e8262c"/>
<circle cx="580.5" cy="330.1" r="1.6" fill="#e8262c"/>
<circle cx="584.5" cy="329.7" r="1.6" fill="#e8262c"/>
<circle cx="589.5" cy="329.1" r="1.6" fill="#e8262c"/>
<circle cx="594.5" cy="328.6" r="1.6" fill="#e8262c"/>
<circle cx="599.5" cy="327.9" r="1.6" fill="#e8262c"/>
<circle cx="604.5" cy="327.2" r="1.6" fill="#e8262c"/>
<circle cx="609.5" cy="326.6" r="1.6" fill="#e8262c"/>
<circle cx="614.5" cy="325.9" r="1.6" fill="#e8262c"/>
<circle cx="619.5" cy="325.3" r="1.6" fill="#e8262c"/>
<circle cx="624.5" cy="324.6" r="1.6" fill="#e8262c"/>
<circle cx="629.5" cy="324.1" r="1.6" fill="#e8262c"/>
<circle cx="634.5" cy="323.7" r="1.6" fill="#e8262c"/>
<circle cx="639.5" cy="323.2" r="1.6" fill="#e8262c"/>
<circle cx="644.5" cy="322.8" r="1.6" fill="#e8262c"/>
<circle cx="649.5" cy="322.4" r="1.6" fill="#e8262c"/>
<circle cx="654.5" cy="322.0" r="1.6" fill="#e8262c"/>
<circle cx="659.5" cy="321.5" r="1.6" fill="#e8262c"/>
<circle cx="664.5" cy="320.9" r="1.6" fill="#e8262c"/>
<circle cx="669.5" cy="320.4" r="1.6" fill="#e8262c"/>
<circle cx="674.5" cy="319.9" r="1.6" fill="#e8262c"/>
<circle cx="679.5" cy="319.3" r="1.6" fill="#e8262c"/>
<circle cx="684.5" cy="318.9" r="1.6" fill="#e8262c"/>
<circle cx="688.5" cy="318.6" r="1.6" fill="#e8262c"/>
<circle cx="693.5" cy="318.2" r="1.6" fill="#e8262c"/>
<circle cx="698.5" cy="317.8" r="1.6" fill="#e8262c"/>
<circle cx="703.5" cy="317.5" r="1.6" fill="#e8262c"/>
<circle cx="708.5" cy="317.1" r="1.6" fill="#e8262c"/>
<circle cx="713.5" cy="317.5" r="1.6" fill="#e8262c"/>
<circle cx="718.5" cy="318.1" r="1.6" fill="#e8262c"/>
<circle cx="723.5" cy="318.7" r="1.6" fill="#e8262c"/>
<circle cx="728.5" cy="319.3" r="1.6" fill="#e8262c"/>
<circle cx="733.5" cy="319.5" r="1.6" fill="#e8262c"/>
<circle cx="738.5" cy="319.4" r="1.6" fill="#e8262c"/>
<circle cx="743.5" cy="319.3" r="1.6" fill="#e8262c"/>
<circle cx="748.5" cy="319.2" r="1.6" fill="#e8262c"/>
<circle cx="753.5" cy="319.1" r="1.6" fill="#e8262c"/>
<circle cx="758.5" cy="319.0" r="1.6" fill="#e8262c"/>
<circle cx="763.5" cy="318.9" r="1.6" fill="#e8262c"/>
<circle cx="768.5" cy="318.8" r="1.6" fill="#e8262c"/>
<circle cx="773.5" cy="319.1" r="1.6" fill="#e8262c"/>
<circle cx="778.5" cy="319.4" r="1.6" fill="#e8262c"/>
<circle cx="783.5" cy="319.8" r="1.6" fill="#e8262c"/>
<circle cx="788.5" cy="320.1" r="1.6" fill="#e8262c"/>
<circle cx="792.5" cy="320.5" r="1.6" fill="#e8262c"/>
<circle cx="797.5" cy="321.0" r="1.6" fill="#e8262c"/>
<circle cx="802.5" cy="321.5" r="1.6" fill="#e8262c"/>
<circle cx="807.5" cy="322.1" r="1.6" fill="#e8262c"/>
<circle cx="812.5" cy="322.8" r="1.6" fill="#e8262c"/>
<circle cx="817.5" cy="323.4" r="1.6" fill="#e8262c"/>
<circle cx="822.5" cy="324.1" r="1.6" fill="#e8262c"/>
<circle cx="827.5" cy="324.8" r="1.6" fill="#e8262c"/>
<circle cx="832.5" cy="325.5" r="1.6" fill="#e8262c"/>
<circle cx="837.5" cy="326.3" r="1.6" fill="#e8262c"/>
<circle cx="842.5" cy="327.0" r="1.6" fill="#e8262c"/>
<circle cx="847.5" cy="327.8" r="1.6" fill="#e8262c"/>
<circle cx="852.5" cy="328.6" r="1.6" fill="#e8262c"/>
<circle cx="857.5" cy="329.4" r="1.6" fill="#e8262c"/>
<circle cx="862.5" cy="330.3" r="1.6" fill="#e8262c"/>
</g>
<rect x="17.5" y="269.5" width="882" height="70" fill="none" stroke="#aab7c4" stroke-width="1" shape-rendering="crispEdges"/>
<rect x="18" y="271" width="31" height="11" fill="#394048"/>
<text x="20" y="281" font-size="11" textLength="27" lengthAdjust="spacingAndGlyphs" fill="#1a1a6e" style="font-family:'Liberation Sans',sans-serif">MACD</text>
<g font-size="11" fill="#f6f6f6" stroke="#f6f6f6" stroke-width="0.25" style="font-family:'Liberation Sans',sans-serif">
<text x="908" y="296">+0.005</text>
<text x="908" y="328">+0.000</text>
</g>
<!-- RSI panel -->
<g shape-rendering="crispEdges">
<line x1="25.5" y1="345" x2="25.5" y2="402" stroke="#727b86" stroke-width="1" stroke-dasharray="3,3"/>
<line x1="55.5" y1="345" x2="55.5" y2="402" stroke="#727b86" stroke-width="1" stroke-dasharray="3,3"/>
<line x1="84.5" y1="345" x2="84.5" y2="402" stroke="#727b86" stroke-width="1" stroke-dasharray="3,3"/>
<line x1="114.5" y1="345" x2="114.5" y2="402" stroke="#727b86" stroke-width="1" stroke-dasharray="3,3"/>
<line x1="144.5" y1="345" x2="144.5" y2="402" stroke="#727b86" stroke-width="1" stroke-dasharray="3,3"/>
<line x1="173.5" y1="345" x2="173.5" y2="402" stroke="#727b86" stroke-width="1" stroke-dasharray="3,3"/>
<line x1="203.5" y1="345" x2="203.5" y2="402" stroke="#727b86" stroke-width="1" stroke-dasharray="3,3"/>
<line x1="233.5" y1="345" x2="233.5" y2="402" stroke="#727b86" stroke-width="1" stroke-dasharray="3,3"/>
<rect x="263" y="345" width="1" height="57" fill="#7f8a96"/>
<line x1="292.5" y1="345" x2="292.5" y2="402" stroke="#727b86" stroke-width="1" stroke-dasharray="3,3"/>
<line x1="322.5" y1="345" x2="322.5" y2="402" stroke="#727b86" stroke-width="1" stroke-dasharray="3,3"/>
<line x1="352.5" y1="345" x2="352.5" y2="402" stroke="#727b86" stroke-width="1" stroke-dasharray="3,3"/>
<line x1="381.5" y1="345" x2="381.5" y2="402" stroke="#727b86" stroke-width="1" stroke-dasharray="3,3"/>
<line x1="411.5" y1="345" x2="411.5" y2="402" stroke="#727b86" stroke-width="1" stroke-dasharray="3,3"/>
<line x1="441.5" y1="345" x2="441.5" y2="402" stroke="#727b86" stroke-width="1" stroke-dasharray="3,3"/>
<line x1="471.5" y1="345" x2="471.5" y2="402" stroke="#727b86" stroke-width="1" stroke-dasharray="3,3"/>
<line x1="500.5" y1="345" x2="500.5" y2="402" stroke="#727b86" stroke-width="1" stroke-dasharray="3,3"/>
<line x1="530.5" y1="345" x2="530.5" y2="402" stroke="#727b86" stroke-width="1" stroke-dasharray="3,3"/>
<line x1="560.5" y1="345" x2="560.5" y2="402" stroke="#727b86" stroke-width="1" stroke-dasharray="3,3"/>
<line x1="589.5" y1="345" x2="589.5" y2="402" stroke="#727b86" stroke-width="1" stroke-dasharray="3,3"/>
<line x1="619.5" y1="345" x2="619.5" y2="402" stroke="#727b86" stroke-width="1" stroke-dasharray="3,3"/>
<line x1="649.5" y1="345" x2="649.5" y2="402" stroke="#727b86" stroke-width="1" stroke-dasharray="3,3"/>
<line x1="679.5" y1="345" x2="679.5" y2="402" stroke="#727b86" stroke-width="1" stroke-dasharray="3,3"/>
<line x1="708.5" y1="345" x2="708.5" y2="402" stroke="#727b86" stroke-width="1" stroke-dasharray="3,3"/>
<line x1="738.5" y1="345" x2="738.5" y2="402" stroke="#727b86" stroke-width="1" stroke-dasharray="3,3"/>
<line x1="768.5" y1="345" x2="768.5" y2="402" stroke="#727b86" stroke-width="1" stroke-dasharray="3,3"/>
<line x1="797.5" y1="345" x2="797.5" y2="402" stroke="#727b86" stroke-width="1" stroke-dasharray="3,3"/>
<line x1="827.5" y1="345" x2="827.5" y2="402" stroke="#727b86" stroke-width="1" stroke-dasharray="3,3"/>
<line x1="857.5" y1="345" x2="857.5" y2="402" stroke="#727b86" stroke-width="1" stroke-dasharray="3,3"/>
<line x1="887.5" y1="345" x2="887.5" y2="402" stroke="#727b86" stroke-width="1" stroke-dasharray="3,3"/>
<line x1="17" y1="378.5" x2="899" y2="378.5" stroke="#727b86" stroke-width="1" stroke-dasharray="3,3"/>
<rect x="899" y="378" width="4" height="1" fill="#aab7c4"/>
</g>
<path d="M17.0,360.0 L40.0,359.2 L45.0,368.3 L50.3,368.3 L56.6,365.8 L69.0,364.8 L74.3,370.0 L79.5,372.0 L87.8,368.3 L100.3,377.3 L105.5,373.0 L110.8,374.2 L123.2,369.6 L129.5,377.3 L135.8,375.2 L142.0,377.3 L150.3,378.0 L158.7,382.5 L164.9,378.3 L170.1,381.5 L178.5,374.2 L183.7,377.3 L187.8,370.4 L194.0,373.1 L204.5,370.4 L211.8,369.6 L218.0,363.3 L223.2,371.0 L233.7,371.0 L240.0,369.0 L250.3,360.6 L253.5,359.6 L257.0,361.7 L261.0,360.6 L271.6,358.5 L276.8,370.0 L282.0,366.2 L294.5,366.2 L301.8,364.8 L305.0,365.8 L308.0,378.3 L311.2,381.5 L333.0,382.5 L338.2,383.5 L348.7,378.3 L352.8,380.4 L358.0,384.2 L362.2,375.8 L372.6,371.0 L376.8,373.1 L382.0,372.0 L390.3,378.0 L396.6,375.2 L402.8,369.0 L412.2,369.0 L416.4,371.0 L421.6,395.0 L423.7,396.7 L430.0,398.8 L440.3,398.8 L444.5,396.0 L452.8,396.0 L457.0,398.8 L465.3,398.8 L471.6,396.0 L477.8,394.0 L490.3,388.8 L497.0,392.9 L505.3,389.8 L511.6,385.6 L515.8,370.4 L521.0,378.8 L526.2,374.6 L531.4,374.6 L535.5,376.2 L540.8,373.1 L551.2,386.7 L554.3,388.8 L563.7,387.7 L570.0,393.3 L575.0,375.2 L580.3,373.1 L585.5,376.7 L597.0,374.2 L604.3,370.4 L609.5,373.1 L614.7,371.0 L622.0,374.2 L629.3,368.3 L638.7,379.4 L644.9,380.8 L649.0,378.3 L660.5,378.3 L665.8,370.0 L669.9,368.3 L680.3,369.6 L688.7,371.0 L692.8,368.3 L699.0,382.5 L703.2,384.2 L708.5,382.9 L713.7,385.0 L718.9,382.9 L723.0,384.2 L728.2,375.8 L732.4,377.3 L737.0,379.0 L742.6,375.6 L748.1,373.5 L753.0,375.3 L757.8,373.5 L763.4,378.3 L768.2,376.2 L773.1,380.8 L778.0,383.2 L783.5,378.3 L789.0,390.6 L793.2,389.2 L796.7,390.6 L802.3,386.7 L807.8,382.2 L812.0,389.7 L816.9,392.9 L822.4,387.4 L827.3,385.3 L832.8,385.3 L837.7,390.1 L842.6,381.4 L848.1,388.0 L852.3,393.3 L857.8,394.3 L862.0,395.3 L862,397 L17,397 Z" fill="url(#rsig)" clip-path="url(#crsifill)"/>
<g clip-path="url(#crsi)">
<path d="M17.0,360.0 L40.0,359.2 L45.0,368.3 L50.3,368.3 L56.6,365.8 L69.0,364.8 L74.3,370.0 L79.5,372.0 L87.8,368.3 L100.3,377.3 L105.5,373.0 L110.8,374.2 L123.2,369.6 L129.5,377.3 L135.8,375.2 L142.0,377.3 L150.3,378.0 L158.7,382.5 L164.9,378.3 L170.1,381.5 L178.5,374.2 L183.7,377.3 L187.8,370.4 L194.0,373.1 L204.5,370.4 L211.8,369.6 L218.0,363.3 L223.2,371.0 L233.7,371.0 L240.0,369.0 L250.3,360.6 L253.5,359.6 L257.0,361.7 L261.0,360.6 L271.6,358.5 L276.8,370.0 L282.0,366.2 L294.5,366.2 L301.8,364.8 L305.0,365.8 L308.0,378.3 L311.2,381.5 L333.0,382.5 L338.2,383.5 L348.7,378.3 L352.8,380.4 L358.0,384.2 L362.2,375.8 L372.6,371.0 L376.8,373.1 L382.0,372.0 L390.3,378.0 L396.6,375.2 L402.8,369.0 L412.2,369.0 L416.4,371.0 L421.6,395.0 L423.7,396.7 L430.0,398.8 L440.3,398.8 L444.5,396.0 L452.8,396.0 L457.0,398.8 L465.3,398.8 L471.6,396.0 L477.8,394.0 L490.3,388.8 L497.0,392.9 L505.3,389.8 L511.6,385.6 L515.8,370.4 L521.0,378.8 L526.2,374.6 L531.4,374.6 L535.5,376.2 L540.8,373.1 L551.2,386.7 L554.3,388.8 L563.7,387.7 L570.0,393.3 L575.0,375.2 L580.3,373.1 L585.5,376.7 L597.0,374.2 L604.3,370.4 L609.5,373.1 L614.7,371.0 L622.0,374.2 L629.3,368.3 L638.7,379.4 L644.9,380.8 L649.0,378.3 L660.5,378.3 L665.8,370.0 L669.9,368.3 L680.3,369.6 L688.7,371.0 L692.8,368.3 L699.0,382.5 L703.2,384.2 L708.5,382.9 L713.7,385.0 L718.9,382.9 L723.0,384.2 L728.2,375.8 L732.4,377.3 L737.0,379.0 L742.6,375.6 L748.1,373.5 L753.0,375.3 L757.8,373.5 L763.4,378.3 L768.2,376.2 L773.1,380.8 L778.0,383.2 L783.5,378.3 L789.0,390.6 L793.2,389.2 L796.7,390.6 L802.3,386.7 L807.8,382.2 L812.0,389.7 L816.9,392.9 L822.4,387.4 L827.3,385.3 L832.8,385.3 L837.7,390.1 L842.6,381.4 L848.1,388.0 L852.3,393.3 L857.8,394.3 L862.0,395.3" stroke="#ec8a2c" stroke-width="1" fill="none" clip-path="url(#crsimid)"/>
<path d="M17.0,360.0 L40.0,359.2 L45.0,368.3 L50.3,368.3 L56.6,365.8 L69.0,364.8 L74.3,370.0 L79.5,372.0 L87.8,368.3 L100.3,377.3 L105.5,373.0 L110.8,374.2 L123.2,369.6 L129.5,377.3 L135.8,375.2 L142.0,377.3 L150.3,378.0 L158.7,382.5 L164.9,378.3 L170.1,381.5 L178.5,374.2 L183.7,377.3 L187.8,370.4 L194.0,373.1 L204.5,370.4 L211.8,369.6 L218.0,363.3 L223.2,371.0 L233.7,371.0 L240.0,369.0 L250.3,360.6 L253.5,359.6 L257.0,361.7 L261.0,360.6 L271.6,358.5 L276.8,370.0 L282.0,366.2 L294.5,366.2 L301.8,364.8 L305.0,365.8 L308.0,378.3 L311.2,381.5 L333.0,382.5 L338.2,383.5 L348.7,378.3 L352.8,380.4 L358.0,384.2 L362.2,375.8 L372.6,371.0 L376.8,373.1 L382.0,372.0 L390.3,378.0 L396.6,375.2 L402.8,369.0 L412.2,369.0 L416.4,371.0 L421.6,395.0 L423.7,396.7 L430.0,398.8 L440.3,398.8 L444.5,396.0 L452.8,396.0 L457.0,398.8 L465.3,398.8 L471.6,396.0 L477.8,394.0 L490.3,388.8 L497.0,392.9 L505.3,389.8 L511.6,385.6 L515.8,370.4 L521.0,378.8 L526.2,374.6 L531.4,374.6 L535.5,376.2 L540.8,373.1 L551.2,386.7 L554.3,388.8 L563.7,387.7 L570.0,393.3 L575.0,375.2 L580.3,373.1 L585.5,376.7 L597.0,374.2 L604.3,370.4 L609.5,373.1 L614.7,371.0 L622.0,374.2 L629.3,368.3 L638.7,379.4 L644.9,380.8 L649.0,378.3 L660.5,378.3 L665.8,370.0 L669.9,368.3 L680.3,369.6 L688.7,371.0 L692.8,368.3 L699.0,382.5 L703.2,384.2 L708.5,382.9 L713.7,385.0 L718.9,382.9 L723.0,384.2 L728.2,375.8 L732.4,377.3 L737.0,379.0 L742.6,375.6 L748.1,373.5 L753.0,375.3 L757.8,373.5 L763.4,378.3 L768.2,376.2 L773.1,380.8 L778.0,383.2 L783.5,378.3 L789.0,390.6 L793.2,389.2 L796.7,390.6 L802.3,386.7 L807.8,382.2 L812.0,389.7 L816.9,392.9 L822.4,387.4 L827.3,385.3 L832.8,385.3 L837.7,390.1 L842.6,381.4 L848.1,388.0 L852.3,393.3 L857.8,394.3 L862.0,395.3" stroke="#d040d0" stroke-width="1.1" fill="none" clip-path="url(#crsitop)"/>
<path d="M17.0,360.0 L40.0,359.2 L45.0,368.3 L50.3,368.3 L56.6,365.8 L69.0,364.8 L74.3,370.0 L79.5,372.0 L87.8,368.3 L100.3,377.3 L105.5,373.0 L110.8,374.2 L123.2,369.6 L129.5,377.3 L135.8,375.2 L142.0,377.3 L150.3,378.0 L158.7,382.5 L164.9,378.3 L170.1,381.5 L178.5,374.2 L183.7,377.3 L187.8,370.4 L194.0,373.1 L204.5,370.4 L211.8,369.6 L218.0,363.3 L223.2,371.0 L233.7,371.0 L240.0,369.0 L250.3,360.6 L253.5,359.6 L257.0,361.7 L261.0,360.6 L271.6,358.5 L276.8,370.0 L282.0,366.2 L294.5,366.2 L301.8,364.8 L305.0,365.8 L308.0,378.3 L311.2,381.5 L333.0,382.5 L338.2,383.5 L348.7,378.3 L352.8,380.4 L358.0,384.2 L362.2,375.8 L372.6,371.0 L376.8,373.1 L382.0,372.0 L390.3,378.0 L396.6,375.2 L402.8,369.0 L412.2,369.0 L416.4,371.0 L421.6,395.0 L423.7,396.7 L430.0,398.8 L440.3,398.8 L444.5,396.0 L452.8,396.0 L457.0,398.8 L465.3,398.8 L471.6,396.0 L477.8,394.0 L490.3,388.8 L497.0,392.9 L505.3,389.8 L511.6,385.6 L515.8,370.4 L521.0,378.8 L526.2,374.6 L531.4,374.6 L535.5,376.2 L540.8,373.1 L551.2,386.7 L554.3,388.8 L563.7,387.7 L570.0,393.3 L575.0,375.2 L580.3,373.1 L585.5,376.7 L597.0,374.2 L604.3,370.4 L609.5,373.1 L614.7,371.0 L622.0,374.2 L629.3,368.3 L638.7,379.4 L644.9,380.8 L649.0,378.3 L660.5,378.3 L665.8,370.0 L669.9,368.3 L680.3,369.6 L688.7,371.0 L692.8,368.3 L699.0,382.5 L703.2,384.2 L708.5,382.9 L713.7,385.0 L718.9,382.9 L723.0,384.2 L728.2,375.8 L732.4,377.3 L737.0,379.0 L742.6,375.6 L748.1,373.5 L753.0,375.3 L757.8,373.5 L763.4,378.3 L768.2,376.2 L773.1,380.8 L778.0,383.2 L783.5,378.3 L789.0,390.6 L793.2,389.2 L796.7,390.6 L802.3,386.7 L807.8,382.2 L812.0,389.7 L816.9,392.9 L822.4,387.4 L827.3,385.3 L832.8,385.3 L837.7,390.1 L842.6,381.4 L848.1,388.0 L852.3,393.3 L857.8,394.3 L862.0,395.3" stroke="#20b030" stroke-width="1.2" stroke-dasharray="5,3" fill="none" clip-path="url(#crsibot)"/>
<rect x="17" y="360" width="845" height="2" fill="#16169c" shape-rendering="crispEdges"/>
<rect x="17" y="396" width="845" height="2" fill="#16169c" shape-rendering="crispEdges"/>
</g>
<rect x="17.5" y="345.5" width="882" height="57" fill="none" stroke="#aab7c4" stroke-width="1" shape-rendering="crispEdges"/>
<text x="19" y="357" font-size="11" textLength="15" lengthAdjust="spacingAndGlyphs" fill="#f08c30" style="font-family:'Liberation Sans',sans-serif">RSI</text>
<g font-size="11" fill="#f6f6f6" stroke="#f6f6f6" stroke-width="0.25" style="font-family:'Liberation Sans',sans-serif">
<text x="907" y="385">50</text>
</g>
<!-- date axis -->
<g shape-rendering="crispEdges">
<rect x="25" y="402" width="1" height="4" fill="#aab7c4"/>
<rect x="55" y="402" width="1" height="4" fill="#aab7c4"/>
<rect x="84" y="402" width="1" height="4" fill="#aab7c4"/>
<rect x="114" y="402" width="1" height="4" fill="#aab7c4"/>
<rect x="144" y="402" width="1" height="4" fill="#aab7c4"/>
<rect x="173" y="402" width="1" height="4" fill="#aab7c4"/>
<rect x="203" y="402" width="1" height="4" fill="#aab7c4"/>
<rect x="233" y="402" width="1" height="4" fill="#aab7c4"/>
<rect x="263" y="402" width="1" height="4" fill="#aab7c4"/>
<rect x="292" y="402" width="1" height="4" fill="#aab7c4"/>
<rect x="322" y="402" width="1" height="4" fill="#aab7c4"/>
<rect x="352" y="402" width="1" height="4" fill="#aab7c4"/>
<rect x="381" y="402" width="1" height="4" fill="#aab7c4"/>
<rect x="411" y="402" width="1" height="4" fill="#aab7c4"/>
<rect x="441" y="402" width="1" height="4" fill="#aab7c4"/>
<rect x="471" y="402" width="1" height="4" fill="#aab7c4"/>
<rect x="500" y="402" width="1" height="4" fill="#aab7c4"/>
<rect x="530" y="402" width="1" height="4" fill="#aab7c4"/>
<rect x="560" y="402" width="1" height="4" fill="#aab7c4"/>
<rect x="589" y="402" width="1" height="4" fill="#aab7c4"/>
<rect x="619" y="402" width="1" height="4" fill="#aab7c4"/>
<rect x="649" y="402" width="1" height="4" fill="#aab7c4"/>
<rect x="679" y="402" width="1" height="4" fill="#aab7c4"/>
<rect x="708" y="402" width="1" height="4" fill="#aab7c4"/>
<rect x="738" y="402" width="1" height="4" fill="#aab7c4"/>
<rect x="768" y="402" width="1" height="4" fill="#aab7c4"/>
<rect x="797" y="402" width="1" height="4" fill="#aab7c4"/>
<rect x="827" y="402" width="1" height="4" fill="#aab7c4"/>
<rect x="857" y="402" width="1" height="4" fill="#aab7c4"/>
<rect x="887" y="402" width="1" height="4" fill="#aab7c4"/>
<rect x="17" y="379" width="2" height="27" fill="#c6ddd6"/>
<rect x="263" y="346" width="1" height="34" fill="#8f9ba7"/>
<rect x="263" y="379" width="2" height="27" fill="#c6d2dc"/>
</g>
<g font-size="11" fill="#f6f6f6" stroke="#f6f6f6" stroke-width="0.25" style="font-family:'Liberation Sans',sans-serif">
<text x="24.4" y="425" text-anchor="middle" letter-spacing="-0.6">21</text>
<text x="54.4" y="425" text-anchor="middle" letter-spacing="-0.6">22</text>
<text x="83.4" y="425" text-anchor="middle" letter-spacing="-0.6">23</text>
<text x="113.4" y="425" text-anchor="middle" letter-spacing="-0.6">24</text>
<text x="143.4" y="425" text-anchor="middle" letter-spacing="-0.6">25</text>
<text x="172.4" y="425" text-anchor="middle" letter-spacing="-0.6">28</text>
<text x="202.4" y="425" text-anchor="middle" letter-spacing="-0.6">29</text>
<text x="232.4" y="425" text-anchor="middle" letter-spacing="-0.6">30</text>
<text x="262.4" y="425" text-anchor="middle" letter-spacing="-0.6">1</text>
<text x="291.4" y="425" text-anchor="middle" letter-spacing="-0.6">2</text>
<text x="321.4" y="425" text-anchor="middle" letter-spacing="-0.6">5</text>
<text x="351.4" y="425" text-anchor="middle" letter-spacing="-0.6">6</text>
<text x="380.4" y="425" text-anchor="middle" letter-spacing="-0.6">7</text>
<text x="410.4" y="425" text-anchor="middle" letter-spacing="-0.6">8</text>
<text x="440.4" y="425" text-anchor="middle" letter-spacing="-0.6">9</text>
<text x="470.4" y="425" text-anchor="middle" letter-spacing="-0.6">12</text>
<text x="499.4" y="425" text-anchor="middle" letter-spacing="-0.6">13</text>
<text x="529.4" y="425" text-anchor="middle" letter-spacing="-0.6">14</text>
<text x="559.4" y="425" text-anchor="middle" letter-spacing="-0.6">15</text>
<text x="588.4" y="425" text-anchor="middle" letter-spacing="-0.6">16</text>
<text x="618.4" y="425" text-anchor="middle" letter-spacing="-0.6">19</text>
<text x="648.4" y="425" text-anchor="middle" letter-spacing="-0.6">20</text>
<text x="678.4" y="425" text-anchor="middle" letter-spacing="-0.6">21</text>
<text x="707.4" y="425" text-anchor="middle" letter-spacing="-0.6">22</text>
<text x="737.4" y="425" text-anchor="middle" letter-spacing="-0.6">23</text>
<text x="767.4" y="425" text-anchor="middle" letter-spacing="-0.6">26</text>
<text x="796.4" y="425" text-anchor="middle" letter-spacing="-0.6">27</text>
<text x="826.4" y="425" text-anchor="middle" letter-spacing="-0.6">28</text>
<text x="856.4" y="425" text-anchor="middle" letter-spacing="-0.6">29</text>
<text x="886.4" y="425" text-anchor="middle" letter-spacing="-0.6">30</text>
</g>
<!-- month labels -->
<rect x="18.5" y="379.5" width="69" height="19" rx="2" fill="#5e7186" stroke="#a8b8c6" stroke-width="1"/>
<text x="25" y="393" font-size="11" fill="#f6f6f6" stroke="#f6f6f6" stroke-width="0.25" style="font-family:'Liberation Sans',sans-serif">Июнь 2021</text>
<rect x="263.5" y="379.5" width="69" height="19" rx="2" fill="#5e7186" stroke="#a8b8c6" stroke-width="1"/>
<text x="271" y="393" font-size="11" fill="#f6f6f6" stroke="#f6f6f6" stroke-width="0.25" style="font-family:'Liberation Sans',sans-serif">Июль 2021</text>
</svg>
</body></html>
